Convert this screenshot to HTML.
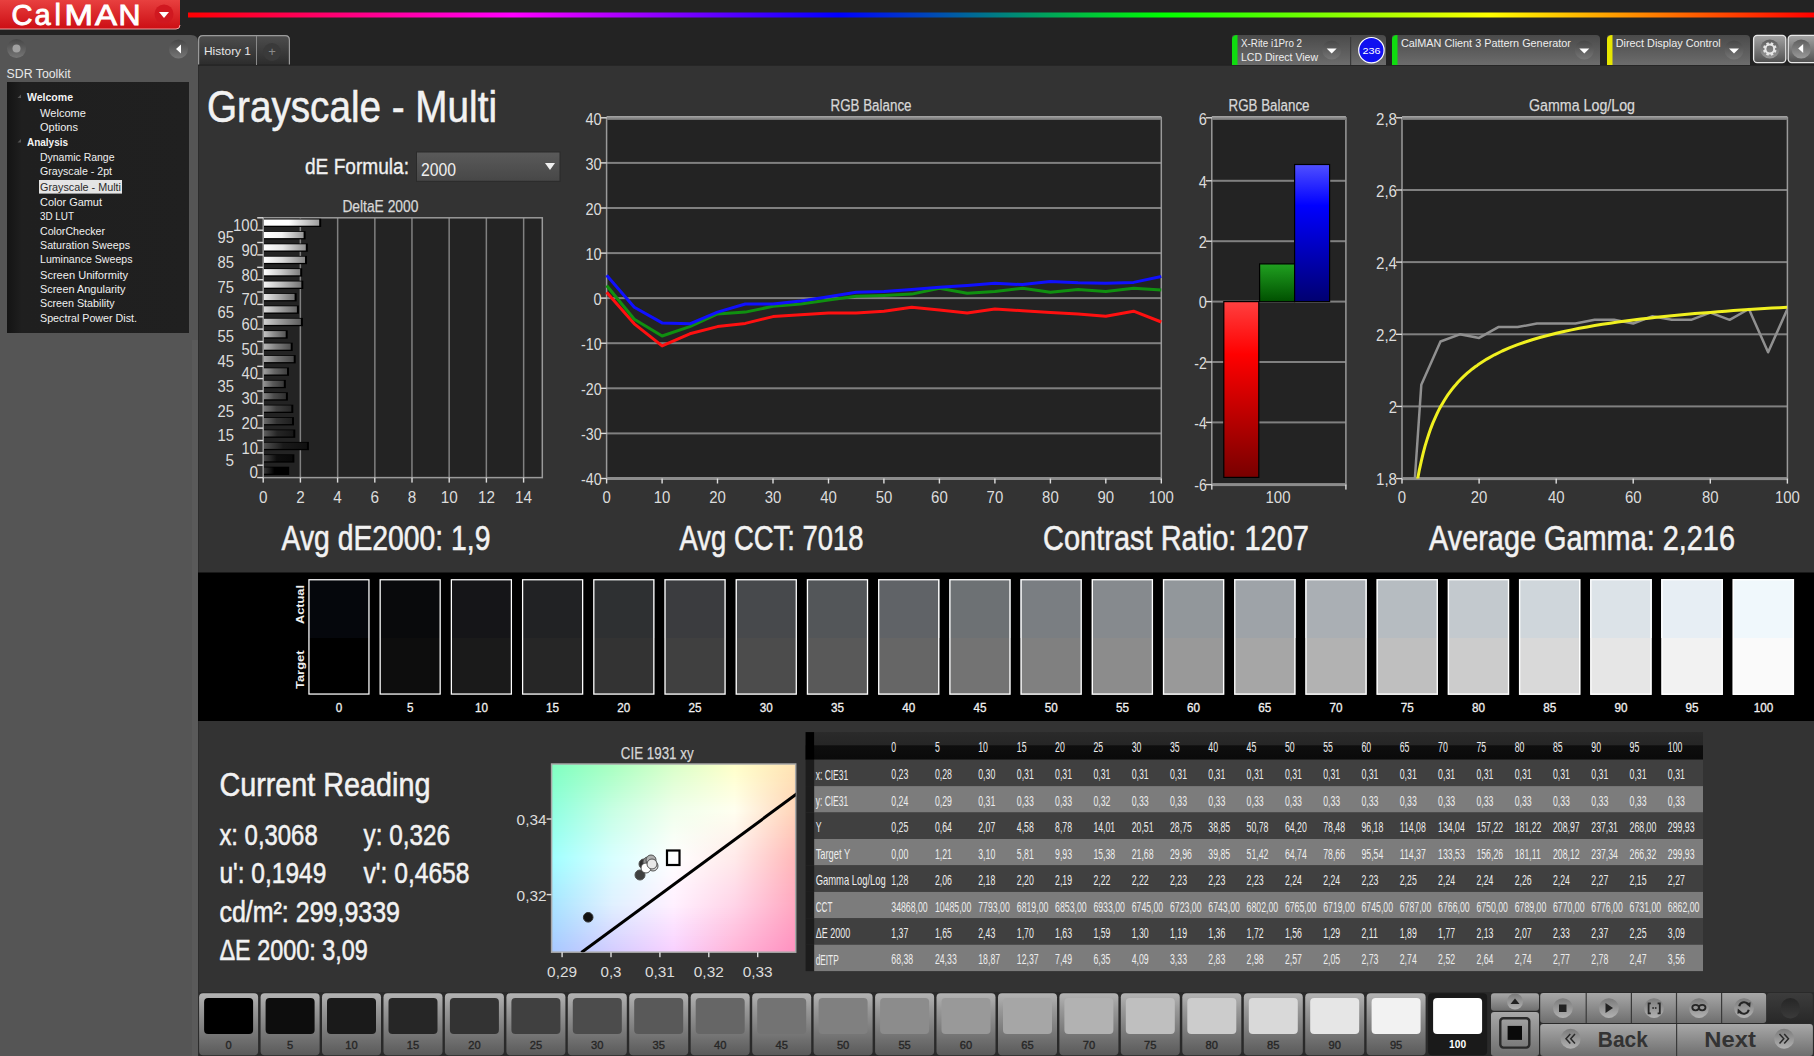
<!DOCTYPE html>
<html><head><meta charset="utf-8"><title>CalMAN</title>
<style>
html,body{margin:0;padding:0;background:#232323;overflow:hidden;width:1814px;height:1056px}
svg{display:block;font-family:"Liberation Sans",sans-serif}
</style></head><body>
<svg width="1814" height="1056" viewBox="0 0 1814 1056">
<defs>
<linearGradient id="rainbow" x1="0" x2="1" y1="0" y2="0">
 <stop offset="0" stop-color="#ff0000"/><stop offset="0.2" stop-color="#ff00ff"/>
 <stop offset="0.4" stop-color="#0000ff"/><stop offset="0.6" stop-color="#00ff00"/>
 <stop offset="0.8" stop-color="#ffff00"/><stop offset="1" stop-color="#ff0000"/></linearGradient>
<linearGradient id="logo" x1="0" x2="0" y1="0" y2="1">
 <stop offset="0" stop-color="#e8403f"/><stop offset="1" stop-color="#cc0e14"/></linearGradient>
<linearGradient id="wid" x1="0" x2="0" y1="0" y2="1">
 <stop offset="0" stop-color="#4a4a4a"/><stop offset="1" stop-color="#6c6c6c"/></linearGradient>
<linearGradient id="tab" x1="0" x2="0" y1="0" y2="1">
 <stop offset="0" stop-color="#4e4e4e"/><stop offset="1" stop-color="#2c2c2c"/></linearGradient>
<linearGradient id="knob" x1="0" x2="0" y1="0" y2="1">
 <stop offset="0" stop-color="#474747"/><stop offset="1" stop-color="#767676"/></linearGradient>
<linearGradient id="btn" x1="0" x2="0" y1="0" y2="1">
 <stop offset="0" stop-color="#ababab"/><stop offset="1" stop-color="#5a5a5a"/></linearGradient>
<linearGradient id="btn2" x1="0" x2="0" y1="0" y2="1">
 <stop offset="0" stop-color="#b0b0b0"/><stop offset="1" stop-color="#6a6a6a"/></linearGradient>
<linearGradient id="treeg" x1="0" x2="1" y1="0" y2="0">
 <stop offset="0" stop-color="#141414"/><stop offset="0.08" stop-color="#1f1f1f"/><stop offset="1" stop-color="#202020"/></linearGradient>
</defs>
<rect x="0.0" y="0.0" width="1814.0" height="1056.0" fill="#232323"/>
<rect x="198.0" y="65.0" width="1616.0" height="928.0" fill="#333333"/>
<rect x="198.0" y="992.0" width="1616.0" height="64.0" fill="#2a2a2a"/>
<path d="M0 35 H191 Q198 35 198 42 V1056 H0 Z" fill="#555555"/>
<rect x="192.0" y="340.0" width="6.0" height="716.0" fill="#5a5a5a"/>
<rect x="198.0" y="65.0" width="1.0" height="992.0" fill="#2c2c2c"/>
<path d="M0 0 H180 V25 Q180 29 176 29 H0 Z" fill="url(#logo)"/>
<path d="M0 29 H176 Q180 29 180 25" fill="none" stroke="#f0a0a0" stroke-width="1"/>
<text x="11.5" y="24.8" font-size="29" fill="#ffffff" stroke="#ffffff" stroke-width="0.9">C</text>
<text x="34.5" y="24.8" font-size="29" fill="#ffffff" stroke="#ffffff" stroke-width="0.9">a</text>
<text x="54.5" y="24.8" font-size="29" fill="#ffffff" stroke="#ffffff" stroke-width="0.9">l</text>
<text x="64.5" y="24.8" font-size="29" fill="#ffffff" textLength="28.5" lengthAdjust="spacingAndGlyphs" stroke="#ffffff" stroke-width="0.9">M</text>
<text x="95.0" y="24.8" font-size="29" fill="#ffffff" textLength="22.0" lengthAdjust="spacingAndGlyphs" stroke="#ffffff" stroke-width="0.9">A</text>
<text x="118.5" y="24.8" font-size="29" fill="#ffffff" textLength="22.0" lengthAdjust="spacingAndGlyphs" stroke="#ffffff" stroke-width="0.9">N</text>
<circle cx="164" cy="14" r="9.5" fill="#d01820"/>
<path d="M159 12 H169 L164 18 Z" fill="#ffffff"/>
<rect x="188.0" y="12.5" width="1626.0" height="5.0" fill="url(#rainbow)"/>
<circle cx="16.5" cy="48.5" r="9.5" fill="url(#knob)"/>
<circle cx="16.5" cy="48.5" r="4" fill="#a0a0a0"/>
<circle cx="178.5" cy="49" r="9.5" fill="url(#knob)"/>
<path d="M176 49 L181 44.5 V53.5 Z" fill="#ffffff"/>
<text x="6.6" y="78.0" font-size="12.3" fill="#e8e8e8" textLength="64.0" lengthAdjust="spacingAndGlyphs">SDR Toolkit</text>
<rect x="7.0" y="82.0" width="182.0" height="251.0" fill="url(#treeg)"/>
<path d="M17.5 98.1 L21 94.6 V98.1 Z" fill="#555"/>
<text x="27.0" y="101.1" font-size="11.2" fill="#f4f4f4" textLength="46.0" lengthAdjust="spacingAndGlyphs" font-weight="bold">Welcome</text>
<text x="40.0" y="117.0" font-size="11.2" fill="#f0f0f0" textLength="46.0" lengthAdjust="spacingAndGlyphs">Welcome</text>
<text x="40.0" y="130.9" font-size="11.2" fill="#f0f0f0" textLength="38.0" lengthAdjust="spacingAndGlyphs">Options</text>
<path d="M17.5 142.5 L21 139.0 V142.5 Z" fill="#555"/>
<text x="27.0" y="145.5" font-size="11.2" fill="#f4f4f4" textLength="41.0" lengthAdjust="spacingAndGlyphs" font-weight="bold">Analysis</text>
<text x="40.0" y="161.4" font-size="11.2" fill="#f0f0f0" textLength="74.5" lengthAdjust="spacingAndGlyphs">Dynamic Range</text>
<text x="40.0" y="175.3" font-size="11.2" fill="#f0f0f0" textLength="72.0" lengthAdjust="spacingAndGlyphs">Grayscale - 2pt</text>
<rect x="39.0" y="180.0" width="83.0" height="13.6" fill="#e4e4e4"/>
<text x="40.0" y="190.5" font-size="11.2" fill="#2a2a2a" textLength="81.0" lengthAdjust="spacingAndGlyphs">Grayscale - Multi</text>
<text x="40.0" y="205.8" font-size="11.2" fill="#f0f0f0" textLength="62.0" lengthAdjust="spacingAndGlyphs">Color Gamut</text>
<text x="40.0" y="219.7" font-size="11.2" fill="#f0f0f0" textLength="34.0" lengthAdjust="spacingAndGlyphs">3D LUT</text>
<text x="40.0" y="234.5" font-size="11.2" fill="#f0f0f0" textLength="65.0" lengthAdjust="spacingAndGlyphs">ColorChecker</text>
<text x="40.0" y="248.9" font-size="11.2" fill="#f0f0f0" textLength="90.0" lengthAdjust="spacingAndGlyphs">Saturation Sweeps</text>
<text x="40.0" y="263.3" font-size="11.2" fill="#f0f0f0" textLength="92.5" lengthAdjust="spacingAndGlyphs">Luminance Sweeps</text>
<text x="40.0" y="278.5" font-size="11.2" fill="#f0f0f0" textLength="88.0" lengthAdjust="spacingAndGlyphs">Screen Uniformity</text>
<text x="40.0" y="292.9" font-size="11.2" fill="#f0f0f0" textLength="85.5" lengthAdjust="spacingAndGlyphs">Screen Angularity</text>
<text x="40.0" y="307.3" font-size="11.2" fill="#f0f0f0" textLength="74.5" lengthAdjust="spacingAndGlyphs">Screen Stability</text>
<text x="40.0" y="322.4" font-size="11.2" fill="#f0f0f0" textLength="97.0" lengthAdjust="spacingAndGlyphs">Spectral Power Dist.</text>
<path d="M198 65 V40 Q198 35 203 35 H285 Q290 35 290 40 V65 Z" fill="url(#tab)"/>
<path d="M198.6 65 V40 Q198.6 35.6 203 35.6 H285 Q289.4 35.6 289.4 40 V65" fill="none" stroke="#9a9a9a" stroke-width="1.2"/>
<rect x="198.0" y="64.5" width="1616.0" height="1.2" fill="#222222"/>
<rect x="256.0" y="36.0" width="1.0" height="29.0" fill="#8a8a8a"/>
<text x="204.0" y="55.0" font-size="11.5" fill="#e6e6e6" textLength="47.0" lengthAdjust="spacingAndGlyphs">History 1</text>
<circle cx="272" cy="52" r="9" fill="#3a3a3a"/>
<text x="272.0" y="56.0" font-size="13" fill="#8a8a8a" text-anchor="middle">+</text>
<path d="M1232 65 V37 Q1232 35 1234 35 H1382 Q1386 35 1386 39 V65 Z" fill="url(#wid)"/>
<path d="M1232 65 V39.5 Q1232 35 1237.5 35 V65 Z" fill="#10dc10"/>
<text x="1241.0" y="46.5" font-size="11.2" fill="#eeeeee" textLength="61.0" lengthAdjust="spacingAndGlyphs">X-Rite i1Pro 2</text>
<text x="1241.0" y="60.6" font-size="11.2" fill="#eeeeee" textLength="77.0" lengthAdjust="spacingAndGlyphs">LCD Direct View</text>
<circle cx="1331.7" cy="50" r="9.5" fill="url(#knob)"/>
<path d="M1326.7 48.5 H1336.7 L1331.7 53.5 Z" fill="#ffffff"/>
<rect x="1350.0" y="37.0" width="1.2" height="28.0" fill="#3a3a3a"/>
<circle cx="1371.4" cy="50.2" r="12.7" fill="#1010f0" stroke="#ffffff" stroke-width="1.2"/>
<text x="1371.4" y="54.0" font-size="9.5" fill="#ffffff" text-anchor="middle" textLength="18.0" lengthAdjust="spacingAndGlyphs">236</text>
<path d="M1392 65 V37 Q1392 35 1394 35 H1596 Q1600 35 1600 39 V65 Z" fill="url(#wid)"/>
<path d="M1392 65 V39.5 Q1392 35 1397.5 35 V65 Z" fill="#10dc10"/>
<text x="1401.0" y="46.5" font-size="11.2" fill="#eeeeee" textLength="170.0" lengthAdjust="spacingAndGlyphs">CalMAN Client 3 Pattern Generator</text>
<circle cx="1584.3" cy="50" r="9.5" fill="url(#knob)"/>
<path d="M1579.3 48.5 H1589.3 L1584.3 53.5 Z" fill="#ffffff"/>
<path d="M1607 65 V37 Q1607 35 1609 35 H1746 Q1750 35 1750 39 V65 Z" fill="url(#wid)"/>
<path d="M1607 65 V39.5 Q1607 35 1612.5 35 V65 Z" fill="#e6e600"/>
<text x="1615.7" y="46.5" font-size="11.2" fill="#eeeeee" textLength="105.0" lengthAdjust="spacingAndGlyphs">Direct Display Control</text>
<circle cx="1734" cy="50" r="9.5" fill="url(#knob)"/>
<path d="M1729 48.5 H1739 L1734 53.5 Z" fill="#ffffff"/>
<linearGradient id="gbtn" x1="0" x2="0" y1="0" y2="1"><stop offset="0" stop-color="#a4a4a4"/><stop offset="1" stop-color="#505050"/></linearGradient>
<linearGradient id="gknob" x1="0" x2="0" y1="0" y2="1"><stop offset="0" stop-color="#5e5e5e"/><stop offset="1" stop-color="#9a9a9a"/></linearGradient>
<rect x="1753.6" y="35.4" width="32.2" height="27.2" rx="3.5" fill="url(#gbtn)" stroke="#e8e8e8" stroke-width="1.3"/>
<circle cx="1769.8" cy="49" r="9.6" fill="url(#gknob)"/>
<g transform="translate(1769.8 49)"><rect x="-1.3" y="-6.8" width="2.6" height="3" fill="#e6e6e6" transform="rotate(22.5)"/><rect x="-1.3" y="-6.8" width="2.6" height="3" fill="#e6e6e6" transform="rotate(67.5)"/><rect x="-1.3" y="-6.8" width="2.6" height="3" fill="#e6e6e6" transform="rotate(112.5)"/><rect x="-1.3" y="-6.8" width="2.6" height="3" fill="#e6e6e6" transform="rotate(157.5)"/><rect x="-1.3" y="-6.8" width="2.6" height="3" fill="#e6e6e6" transform="rotate(202.5)"/><rect x="-1.3" y="-6.8" width="2.6" height="3" fill="#e6e6e6" transform="rotate(247.5)"/><rect x="-1.3" y="-6.8" width="2.6" height="3" fill="#e6e6e6" transform="rotate(292.5)"/><rect x="-1.3" y="-6.8" width="2.6" height="3" fill="#e6e6e6" transform="rotate(337.5)"/><circle r="4.4" fill="none" stroke="#e6e6e6" stroke-width="2"/></g>
<rect x="1788.2" y="35.4" width="30" height="27.2" rx="3.5" fill="url(#gbtn)" stroke="#e8e8e8" stroke-width="1.3"/>
<circle cx="1801.2" cy="49" r="9.6" fill="url(#gknob)"/>
<path d="M1798.2 48.5 L1803.2 44 V53 Z" fill="#ffffff"/>
<text x="207.0" y="122.3" font-size="44.5" fill="#f2f2f2" textLength="290.0" lengthAdjust="spacingAndGlyphs" stroke="#f2f2f2" stroke-width="0.55">Grayscale - Multi</text>
<text x="305.0" y="174.4" font-size="22" fill="#f0f0f0" textLength="104.0" lengthAdjust="spacingAndGlyphs" stroke="#f0f0f0" stroke-width="0.35">dE Formula:</text>
<linearGradient id="dd" x1="0" x2="0" y1="0" y2="1"><stop offset="0" stop-color="#5a5a5a"/><stop offset="1" stop-color="#474747"/></linearGradient>
<rect x="416.5" y="152" width="143.5" height="29.3" fill="url(#dd)" stroke="#2a2a2a" stroke-width="1"/>
<text x="421.0" y="176.0" font-size="19" fill="#f0f0f0" textLength="35.0" lengthAdjust="spacingAndGlyphs">2000</text>
<path d="M545 163 H555 L550 170 Z" fill="#f0f0f0"/>
<linearGradient id="tborder" x1="0" x2="0" y1="0" y2="1"><stop offset="0" stop-color="#a8a8a8"/><stop offset="1" stop-color="#6e6e6e"/></linearGradient>
<text x="380.4" y="211.8" font-size="17" fill="#d8d8d8" text-anchor="middle" textLength="76.0" lengthAdjust="spacingAndGlyphs" stroke="#d8d8d8" stroke-width="0.25">DeltaE 2000</text>
<rect x="263.2" y="217.8" width="279.1" height="259.8" fill="#232323"/>
<rect x="299.6" y="217.8" width="1.5" height="259.8" fill="#808080"/>
<rect x="336.9" y="217.8" width="1.5" height="259.8" fill="#808080"/>
<rect x="374.1" y="217.8" width="1.5" height="259.8" fill="#808080"/>
<rect x="411.2" y="217.8" width="1.5" height="259.8" fill="#808080"/>
<rect x="448.4" y="217.8" width="1.5" height="259.8" fill="#808080"/>
<rect x="485.6" y="217.8" width="1.5" height="259.8" fill="#808080"/>
<rect x="522.9" y="217.8" width="1.5" height="259.8" fill="#808080"/>
<rect x="263.2" y="217.8" width="279.09999999999997" height="259.8" fill="none" stroke="#9a9a9a" stroke-width="1.5"/>
<linearGradient id="bg0" x1="0" x2="1" y1="0" y2="0"><stop offset="0" stop-color="rgb(55,55,55)"/><stop offset="0.45" stop-color="rgb(0,0,0)"/><stop offset="1" stop-color="rgb(0,0,0)"/></linearGradient>
<rect x="264.0" y="466.7" width="25.2" height="8.3" fill="#000"/>
<rect x="264.0" y="467.5" width="23.2" height="6.2" fill="url(#bg0)"/>
<linearGradient id="bg1" x1="0" x2="1" y1="0" y2="0"><stop offset="0" stop-color="rgb(68,68,68)"/><stop offset="0.45" stop-color="rgb(13,13,13)"/><stop offset="1" stop-color="rgb(8,8,8)"/></linearGradient>
<rect x="264.0" y="454.3" width="30.4" height="8.3" fill="#000"/>
<rect x="264.0" y="455.1" width="28.4" height="6.2" fill="url(#bg1)"/>
<linearGradient id="bg2" x1="0" x2="1" y1="0" y2="0"><stop offset="0" stop-color="rgb(81,81,81)"/><stop offset="0.45" stop-color="rgb(26,26,26)"/><stop offset="1" stop-color="rgb(16,16,16)"/></linearGradient>
<rect x="264.0" y="441.9" width="44.9" height="8.3" fill="#000"/>
<rect x="264.0" y="442.7" width="42.9" height="6.2" fill="url(#bg2)"/>
<linearGradient id="bg3" x1="0" x2="1" y1="0" y2="0"><stop offset="0" stop-color="rgb(93,93,93)"/><stop offset="0.45" stop-color="rgb(38,38,38)"/><stop offset="1" stop-color="rgb(23,23,23)"/></linearGradient>
<rect x="264.0" y="429.5" width="31.3" height="8.3" fill="#000"/>
<rect x="264.0" y="430.3" width="29.3" height="6.2" fill="url(#bg3)"/>
<linearGradient id="bg4" x1="0" x2="1" y1="0" y2="0"><stop offset="0" stop-color="rgb(106,106,106)"/><stop offset="0.45" stop-color="rgb(51,51,51)"/><stop offset="1" stop-color="rgb(31,31,31)"/></linearGradient>
<rect x="264.0" y="417.1" width="30.0" height="8.3" fill="#000"/>
<rect x="264.0" y="417.9" width="28.0" height="6.2" fill="url(#bg4)"/>
<linearGradient id="bg5" x1="0" x2="1" y1="0" y2="0"><stop offset="0" stop-color="rgb(119,119,119)"/><stop offset="0.45" stop-color="rgb(64,64,64)"/><stop offset="1" stop-color="rgb(39,39,39)"/></linearGradient>
<rect x="264.0" y="404.7" width="29.3" height="8.3" fill="#000"/>
<rect x="264.0" y="405.5" width="27.3" height="6.2" fill="url(#bg5)"/>
<linearGradient id="bg6" x1="0" x2="1" y1="0" y2="0"><stop offset="0" stop-color="rgb(131,131,131)"/><stop offset="0.45" stop-color="rgb(76,76,76)"/><stop offset="1" stop-color="rgb(47,47,47)"/></linearGradient>
<rect x="264.0" y="392.3" width="23.9" height="8.3" fill="#000"/>
<rect x="264.0" y="393.1" width="21.9" height="6.2" fill="url(#bg6)"/>
<linearGradient id="bg7" x1="0" x2="1" y1="0" y2="0"><stop offset="0" stop-color="rgb(144,144,144)"/><stop offset="0.45" stop-color="rgb(89,89,89)"/><stop offset="1" stop-color="rgb(55,55,55)"/></linearGradient>
<rect x="264.0" y="379.9" width="21.8" height="8.3" fill="#000"/>
<rect x="264.0" y="380.7" width="19.8" height="6.2" fill="url(#bg7)"/>
<linearGradient id="bg8" x1="0" x2="1" y1="0" y2="0"><stop offset="0" stop-color="rgb(157,157,157)"/><stop offset="0.45" stop-color="rgb(102,102,102)"/><stop offset="1" stop-color="rgb(63,63,63)"/></linearGradient>
<rect x="264.0" y="367.5" width="25.0" height="8.3" fill="#000"/>
<rect x="264.0" y="368.3" width="23.0" height="6.2" fill="url(#bg8)"/>
<linearGradient id="bg9" x1="0" x2="1" y1="0" y2="0"><stop offset="0" stop-color="rgb(170,170,170)"/><stop offset="0.45" stop-color="rgb(115,115,115)"/><stop offset="1" stop-color="rgb(71,71,71)"/></linearGradient>
<rect x="264.0" y="355.1" width="31.7" height="8.3" fill="#000"/>
<rect x="264.0" y="355.9" width="29.7" height="6.2" fill="url(#bg9)"/>
<linearGradient id="bg10" x1="0" x2="1" y1="0" y2="0"><stop offset="0" stop-color="rgb(183,183,183)"/><stop offset="0.45" stop-color="rgb(128,128,128)"/><stop offset="1" stop-color="rgb(79,79,79)"/></linearGradient>
<rect x="264.0" y="342.7" width="28.7" height="8.3" fill="#000"/>
<rect x="264.0" y="343.5" width="26.7" height="6.2" fill="url(#bg10)"/>
<linearGradient id="bg11" x1="0" x2="1" y1="0" y2="0"><stop offset="0" stop-color="rgb(195,195,195)"/><stop offset="0.45" stop-color="rgb(140,140,140)"/><stop offset="1" stop-color="rgb(86,86,86)"/></linearGradient>
<rect x="264.0" y="330.3" width="23.7" height="8.3" fill="#000"/>
<rect x="264.0" y="331.1" width="21.7" height="6.2" fill="url(#bg11)"/>
<linearGradient id="bg12" x1="0" x2="1" y1="0" y2="0"><stop offset="0" stop-color="rgb(208,208,208)"/><stop offset="0.45" stop-color="rgb(153,153,153)"/><stop offset="1" stop-color="rgb(94,94,94)"/></linearGradient>
<rect x="264.0" y="317.9" width="38.9" height="8.3" fill="#000"/>
<rect x="264.0" y="318.7" width="36.9" height="6.2" fill="url(#bg12)"/>
<linearGradient id="bg13" x1="0" x2="1" y1="0" y2="0"><stop offset="0" stop-color="rgb(221,221,221)"/><stop offset="0.45" stop-color="rgb(166,166,166)"/><stop offset="1" stop-color="rgb(102,102,102)"/></linearGradient>
<rect x="264.0" y="305.5" width="34.9" height="8.3" fill="#000"/>
<rect x="264.0" y="306.3" width="32.9" height="6.2" fill="url(#bg13)"/>
<linearGradient id="bg14" x1="0" x2="1" y1="0" y2="0"><stop offset="0" stop-color="rgb(233,233,233)"/><stop offset="0.45" stop-color="rgb(178,178,178)"/><stop offset="1" stop-color="rgb(110,110,110)"/></linearGradient>
<rect x="264.0" y="293.1" width="32.6" height="8.3" fill="#000"/>
<rect x="264.0" y="293.9" width="30.6" height="6.2" fill="url(#bg14)"/>
<linearGradient id="bg15" x1="0" x2="1" y1="0" y2="0"><stop offset="0" stop-color="rgb(246,246,246)"/><stop offset="0.45" stop-color="rgb(191,191,191)"/><stop offset="1" stop-color="rgb(118,118,118)"/></linearGradient>
<rect x="264.0" y="280.7" width="39.3" height="8.3" fill="#000"/>
<rect x="264.0" y="281.5" width="37.3" height="6.2" fill="url(#bg15)"/>
<linearGradient id="bg16" x1="0" x2="1" y1="0" y2="0"><stop offset="0" stop-color="rgb(255,255,255)"/><stop offset="0.45" stop-color="rgb(204,204,204)"/><stop offset="1" stop-color="rgb(126,126,126)"/></linearGradient>
<rect x="264.0" y="268.3" width="38.2" height="8.3" fill="#000"/>
<rect x="264.0" y="269.1" width="36.2" height="6.2" fill="url(#bg16)"/>
<linearGradient id="bg17" x1="0" x2="1" y1="0" y2="0"><stop offset="0" stop-color="rgb(255,255,255)"/><stop offset="0.45" stop-color="rgb(217,217,217)"/><stop offset="1" stop-color="rgb(134,134,134)"/></linearGradient>
<rect x="264.0" y="255.9" width="43.0" height="8.3" fill="#000"/>
<rect x="264.0" y="256.7" width="41.0" height="6.2" fill="url(#bg17)"/>
<linearGradient id="bg18" x1="0" x2="1" y1="0" y2="0"><stop offset="0" stop-color="rgb(255,255,255)"/><stop offset="0.45" stop-color="rgb(230,230,230)"/><stop offset="1" stop-color="rgb(142,142,142)"/></linearGradient>
<rect x="264.0" y="243.5" width="43.8" height="8.3" fill="#000"/>
<rect x="264.0" y="244.3" width="41.8" height="6.2" fill="url(#bg18)"/>
<linearGradient id="bg19" x1="0" x2="1" y1="0" y2="0"><stop offset="0" stop-color="rgb(255,255,255)"/><stop offset="0.45" stop-color="rgb(242,242,242)"/><stop offset="1" stop-color="rgb(150,150,150)"/></linearGradient>
<rect x="264.0" y="231.1" width="41.6" height="8.3" fill="#000"/>
<rect x="264.0" y="231.9" width="39.6" height="6.2" fill="url(#bg19)"/>
<linearGradient id="bg20" x1="0" x2="1" y1="0" y2="0"><stop offset="0" stop-color="rgb(255,255,255)"/><stop offset="0.45" stop-color="rgb(255,255,255)"/><stop offset="1" stop-color="rgb(158,158,158)"/></linearGradient>
<rect x="264.0" y="218.7" width="57.2" height="8.3" fill="#000"/>
<rect x="264.0" y="219.5" width="55.2" height="6.2" fill="url(#bg20)"/>
<text x="258.0" y="478.4" font-size="16" fill="#dcdcdc" text-anchor="end" textLength="8.5" lengthAdjust="spacingAndGlyphs">0</text>
<text x="234.0" y="466.0" font-size="16" fill="#dcdcdc" text-anchor="end" textLength="8.5" lengthAdjust="spacingAndGlyphs">5</text>
<text x="258.0" y="453.7" font-size="16" fill="#dcdcdc" text-anchor="end" textLength="16.5" lengthAdjust="spacingAndGlyphs">10</text>
<text x="234.0" y="441.3" font-size="16" fill="#dcdcdc" text-anchor="end" textLength="16.5" lengthAdjust="spacingAndGlyphs">15</text>
<text x="258.0" y="428.9" font-size="16" fill="#dcdcdc" text-anchor="end" textLength="16.5" lengthAdjust="spacingAndGlyphs">20</text>
<text x="234.0" y="416.6" font-size="16" fill="#dcdcdc" text-anchor="end" textLength="16.5" lengthAdjust="spacingAndGlyphs">25</text>
<text x="258.0" y="404.2" font-size="16" fill="#dcdcdc" text-anchor="end" textLength="16.5" lengthAdjust="spacingAndGlyphs">30</text>
<text x="234.0" y="391.8" font-size="16" fill="#dcdcdc" text-anchor="end" textLength="16.5" lengthAdjust="spacingAndGlyphs">35</text>
<text x="258.0" y="379.4" font-size="16" fill="#dcdcdc" text-anchor="end" textLength="16.5" lengthAdjust="spacingAndGlyphs">40</text>
<text x="234.0" y="367.1" font-size="16" fill="#dcdcdc" text-anchor="end" textLength="16.5" lengthAdjust="spacingAndGlyphs">45</text>
<text x="258.0" y="354.7" font-size="16" fill="#dcdcdc" text-anchor="end" textLength="16.5" lengthAdjust="spacingAndGlyphs">50</text>
<text x="234.0" y="342.3" font-size="16" fill="#dcdcdc" text-anchor="end" textLength="16.5" lengthAdjust="spacingAndGlyphs">55</text>
<text x="258.0" y="330.0" font-size="16" fill="#dcdcdc" text-anchor="end" textLength="16.5" lengthAdjust="spacingAndGlyphs">60</text>
<text x="234.0" y="317.6" font-size="16" fill="#dcdcdc" text-anchor="end" textLength="16.5" lengthAdjust="spacingAndGlyphs">65</text>
<text x="258.0" y="305.2" font-size="16" fill="#dcdcdc" text-anchor="end" textLength="16.5" lengthAdjust="spacingAndGlyphs">70</text>
<text x="234.0" y="292.8" font-size="16" fill="#dcdcdc" text-anchor="end" textLength="16.5" lengthAdjust="spacingAndGlyphs">75</text>
<text x="258.0" y="280.5" font-size="16" fill="#dcdcdc" text-anchor="end" textLength="16.5" lengthAdjust="spacingAndGlyphs">80</text>
<text x="234.0" y="268.1" font-size="16" fill="#dcdcdc" text-anchor="end" textLength="16.5" lengthAdjust="spacingAndGlyphs">85</text>
<text x="258.0" y="255.7" font-size="16" fill="#dcdcdc" text-anchor="end" textLength="16.5" lengthAdjust="spacingAndGlyphs">90</text>
<text x="234.0" y="243.4" font-size="16" fill="#dcdcdc" text-anchor="end" textLength="16.5" lengthAdjust="spacingAndGlyphs">95</text>
<text x="258.0" y="231.0" font-size="16" fill="#dcdcdc" text-anchor="end" textLength="25.0" lengthAdjust="spacingAndGlyphs">100</text>
<rect x="257.2" y="476.9" width="6.0" height="1.4" fill="#dcdcdc"/>
<rect x="257.2" y="464.5" width="6.0" height="1.4" fill="#dcdcdc"/>
<rect x="257.2" y="452.2" width="6.0" height="1.4" fill="#dcdcdc"/>
<rect x="257.2" y="439.8" width="6.0" height="1.4" fill="#dcdcdc"/>
<rect x="257.2" y="427.4" width="6.0" height="1.4" fill="#dcdcdc"/>
<rect x="257.2" y="415.0" width="6.0" height="1.4" fill="#dcdcdc"/>
<rect x="257.2" y="402.7" width="6.0" height="1.4" fill="#dcdcdc"/>
<rect x="257.2" y="390.3" width="6.0" height="1.4" fill="#dcdcdc"/>
<rect x="257.2" y="377.9" width="6.0" height="1.4" fill="#dcdcdc"/>
<rect x="257.2" y="365.6" width="6.0" height="1.4" fill="#dcdcdc"/>
<rect x="257.2" y="353.2" width="6.0" height="1.4" fill="#dcdcdc"/>
<rect x="257.2" y="340.8" width="6.0" height="1.4" fill="#dcdcdc"/>
<rect x="257.2" y="328.4" width="6.0" height="1.4" fill="#dcdcdc"/>
<rect x="257.2" y="316.1" width="6.0" height="1.4" fill="#dcdcdc"/>
<rect x="257.2" y="303.7" width="6.0" height="1.4" fill="#dcdcdc"/>
<rect x="257.2" y="291.3" width="6.0" height="1.4" fill="#dcdcdc"/>
<rect x="257.2" y="279.0" width="6.0" height="1.4" fill="#dcdcdc"/>
<rect x="257.2" y="266.6" width="6.0" height="1.4" fill="#dcdcdc"/>
<rect x="257.2" y="254.2" width="6.0" height="1.4" fill="#dcdcdc"/>
<rect x="257.2" y="241.8" width="6.0" height="1.4" fill="#dcdcdc"/>
<rect x="257.2" y="229.5" width="6.0" height="1.4" fill="#dcdcdc"/>
<rect x="257.2" y="217.1" width="6.0" height="1.4" fill="#dcdcdc"/>
<rect x="262.5" y="477.6" width="1.4" height="5.0" fill="#dcdcdc"/>
<text x="263.2" y="503.0" font-size="16" fill="#dcdcdc" text-anchor="middle" textLength="8.5" lengthAdjust="spacingAndGlyphs">0</text>
<rect x="299.7" y="477.6" width="1.4" height="5.0" fill="#dcdcdc"/>
<text x="300.4" y="503.0" font-size="16" fill="#dcdcdc" text-anchor="middle" textLength="8.5" lengthAdjust="spacingAndGlyphs">2</text>
<rect x="336.9" y="477.6" width="1.4" height="5.0" fill="#dcdcdc"/>
<text x="337.6" y="503.0" font-size="16" fill="#dcdcdc" text-anchor="middle" textLength="8.5" lengthAdjust="spacingAndGlyphs">4</text>
<rect x="374.1" y="477.6" width="1.4" height="5.0" fill="#dcdcdc"/>
<text x="374.8" y="503.0" font-size="16" fill="#dcdcdc" text-anchor="middle" textLength="8.5" lengthAdjust="spacingAndGlyphs">6</text>
<rect x="411.3" y="477.6" width="1.4" height="5.0" fill="#dcdcdc"/>
<text x="412.0" y="503.0" font-size="16" fill="#dcdcdc" text-anchor="middle" textLength="8.5" lengthAdjust="spacingAndGlyphs">8</text>
<rect x="448.5" y="477.6" width="1.4" height="5.0" fill="#dcdcdc"/>
<text x="449.2" y="503.0" font-size="16" fill="#dcdcdc" text-anchor="middle" textLength="17.0" lengthAdjust="spacingAndGlyphs">10</text>
<rect x="485.7" y="477.6" width="1.4" height="5.0" fill="#dcdcdc"/>
<text x="486.4" y="503.0" font-size="16" fill="#dcdcdc" text-anchor="middle" textLength="17.0" lengthAdjust="spacingAndGlyphs">12</text>
<rect x="522.9" y="477.6" width="1.4" height="5.0" fill="#dcdcdc"/>
<text x="523.6" y="503.0" font-size="16" fill="#dcdcdc" text-anchor="middle" textLength="17.0" lengthAdjust="spacingAndGlyphs">14</text>
<text x="871.0" y="111.2" font-size="17.3" fill="#d8d8d8" text-anchor="middle" textLength="81.0" lengthAdjust="spacingAndGlyphs" stroke="#d8d8d8" stroke-width="0.25">RGB Balance</text>
<rect x="606.6" y="117.8" width="554.7" height="360.7" fill="#232323"/>
<rect x="606.6" y="161.9" width="554.7" height="2.0" fill="#808080"/>
<rect x="606.6" y="207.0" width="554.7" height="2.0" fill="#808080"/>
<rect x="606.6" y="252.1" width="554.7" height="2.0" fill="#808080"/>
<rect x="606.6" y="297.1" width="554.7" height="2.0" fill="#808080"/>
<rect x="606.6" y="342.2" width="554.7" height="2.0" fill="#808080"/>
<rect x="606.6" y="387.3" width="554.7" height="2.0" fill="#808080"/>
<rect x="606.6" y="432.4" width="554.7" height="2.0" fill="#808080"/>
<rect x="606.6" y="117.8" width="554.6999999999999" height="360.7" fill="none" stroke="#9a9a9a" stroke-width="1.5"/>
<rect x="606.6" y="116.0" width="554.7" height="4.0" fill="url(#tborder)"/>
<rect x="606.6" y="477.0" width="554.7" height="3.0" fill="#8c8c8c"/>
<rect x="600.6" y="117.1" width="6.0" height="1.4" fill="#dcdcdc"/>
<text x="601.6" y="124.6" font-size="16" fill="#dcdcdc" text-anchor="end" textLength="16.2" lengthAdjust="spacingAndGlyphs">40</text>
<rect x="600.6" y="162.2" width="6.0" height="1.4" fill="#dcdcdc"/>
<text x="601.6" y="169.7" font-size="16" fill="#dcdcdc" text-anchor="end" textLength="16.2" lengthAdjust="spacingAndGlyphs">30</text>
<rect x="600.6" y="207.3" width="6.0" height="1.4" fill="#dcdcdc"/>
<text x="601.6" y="214.8" font-size="16" fill="#dcdcdc" text-anchor="end" textLength="16.2" lengthAdjust="spacingAndGlyphs">20</text>
<rect x="600.6" y="252.4" width="6.0" height="1.4" fill="#dcdcdc"/>
<text x="601.6" y="259.9" font-size="16" fill="#dcdcdc" text-anchor="end" textLength="16.2" lengthAdjust="spacingAndGlyphs">10</text>
<rect x="600.6" y="297.4" width="6.0" height="1.4" fill="#dcdcdc"/>
<text x="601.6" y="304.9" font-size="16" fill="#dcdcdc" text-anchor="end" textLength="8.1" lengthAdjust="spacingAndGlyphs">0</text>
<rect x="600.6" y="342.5" width="6.0" height="1.4" fill="#dcdcdc"/>
<text x="601.6" y="350.0" font-size="16" fill="#dcdcdc" text-anchor="end" textLength="20.6" lengthAdjust="spacingAndGlyphs">-10</text>
<rect x="600.6" y="387.6" width="6.0" height="1.4" fill="#dcdcdc"/>
<text x="601.6" y="395.1" font-size="16" fill="#dcdcdc" text-anchor="end" textLength="20.6" lengthAdjust="spacingAndGlyphs">-20</text>
<rect x="600.6" y="432.7" width="6.0" height="1.4" fill="#dcdcdc"/>
<text x="601.6" y="440.2" font-size="16" fill="#dcdcdc" text-anchor="end" textLength="20.6" lengthAdjust="spacingAndGlyphs">-30</text>
<rect x="600.6" y="477.8" width="6.0" height="1.4" fill="#dcdcdc"/>
<text x="601.6" y="485.3" font-size="16" fill="#dcdcdc" text-anchor="end" textLength="20.6" lengthAdjust="spacingAndGlyphs">-40</text>
<rect x="605.9" y="478.5" width="1.4" height="5.0" fill="#dcdcdc"/>
<text x="606.6" y="503.0" font-size="16" fill="#dcdcdc" text-anchor="middle" textLength="8.3" lengthAdjust="spacingAndGlyphs">0</text>
<rect x="661.4" y="478.5" width="1.4" height="5.0" fill="#dcdcdc"/>
<text x="662.1" y="503.0" font-size="16" fill="#dcdcdc" text-anchor="middle" textLength="16.6" lengthAdjust="spacingAndGlyphs">10</text>
<rect x="716.8" y="478.5" width="1.4" height="5.0" fill="#dcdcdc"/>
<text x="717.5" y="503.0" font-size="16" fill="#dcdcdc" text-anchor="middle" textLength="16.6" lengthAdjust="spacingAndGlyphs">20</text>
<rect x="772.3" y="478.5" width="1.4" height="5.0" fill="#dcdcdc"/>
<text x="773.0" y="503.0" font-size="16" fill="#dcdcdc" text-anchor="middle" textLength="16.6" lengthAdjust="spacingAndGlyphs">30</text>
<rect x="827.8" y="478.5" width="1.4" height="5.0" fill="#dcdcdc"/>
<text x="828.5" y="503.0" font-size="16" fill="#dcdcdc" text-anchor="middle" textLength="16.6" lengthAdjust="spacingAndGlyphs">40</text>
<rect x="883.2" y="478.5" width="1.4" height="5.0" fill="#dcdcdc"/>
<text x="884.0" y="503.0" font-size="16" fill="#dcdcdc" text-anchor="middle" textLength="16.6" lengthAdjust="spacingAndGlyphs">50</text>
<rect x="938.7" y="478.5" width="1.4" height="5.0" fill="#dcdcdc"/>
<text x="939.4" y="503.0" font-size="16" fill="#dcdcdc" text-anchor="middle" textLength="16.6" lengthAdjust="spacingAndGlyphs">60</text>
<rect x="994.2" y="478.5" width="1.4" height="5.0" fill="#dcdcdc"/>
<text x="994.9" y="503.0" font-size="16" fill="#dcdcdc" text-anchor="middle" textLength="16.6" lengthAdjust="spacingAndGlyphs">70</text>
<rect x="1049.7" y="478.5" width="1.4" height="5.0" fill="#dcdcdc"/>
<text x="1050.4" y="503.0" font-size="16" fill="#dcdcdc" text-anchor="middle" textLength="16.6" lengthAdjust="spacingAndGlyphs">80</text>
<rect x="1105.1" y="478.5" width="1.4" height="5.0" fill="#dcdcdc"/>
<text x="1105.8" y="503.0" font-size="16" fill="#dcdcdc" text-anchor="middle" textLength="16.6" lengthAdjust="spacingAndGlyphs">90</text>
<rect x="1160.6" y="478.5" width="1.4" height="5.0" fill="#dcdcdc"/>
<text x="1161.3" y="503.0" font-size="16" fill="#dcdcdc" text-anchor="middle" textLength="24.9" lengthAdjust="spacingAndGlyphs">100</text>
<polyline points="606.6,292.3 634.3,323.8 662.1,345.9 689.8,333.8 717.5,326.6 745.3,323.4 773.0,316.6 800.7,314.8 828.5,313.0 856.2,313.0 884.0,311.2 911.7,307.2 939.4,309.9 967.2,313.0 994.9,309.0 1022.6,310.8 1050.4,312.6 1078.1,313.9 1105.8,316.2 1133.6,311.2 1161.3,322.0" fill="none" stroke="#ff1010" stroke-width="3" stroke-linejoin="round"/>
<polyline points="606.6,285.5 634.3,319.3 662.1,336.0 689.8,326.6 717.5,313.9 745.3,312.1 773.0,306.3 800.7,304.0 828.5,300.0 856.2,296.3 884.0,295.4 911.7,294.1 939.4,288.2 967.2,293.2 994.9,291.4 1022.6,288.2 1050.4,292.3 1078.1,289.6 1105.8,291.4 1133.6,288.2 1161.3,290.0" fill="none" stroke="#109010" stroke-width="3" stroke-linejoin="round"/>
<polyline points="606.6,275.2 634.3,307.2 662.1,322.9 689.8,323.8 717.5,312.1 745.3,304.0 773.0,304.0 800.7,300.9 828.5,296.8 856.2,292.3 884.0,291.4 911.7,289.6 939.4,287.3 967.2,285.5 994.9,283.3 1022.6,284.6 1050.4,281.5 1078.1,282.8 1105.8,283.3 1133.6,282.4 1161.3,276.5" fill="none" stroke="#1010ff" stroke-width="3" stroke-linejoin="round"/>
<text x="1269.0" y="111.2" font-size="17.3" fill="#d8d8d8" text-anchor="middle" textLength="81.0" lengthAdjust="spacingAndGlyphs" stroke="#d8d8d8" stroke-width="0.25">RGB Balance</text>
<rect x="1211.8" y="117.8" width="134.1" height="366.8" fill="#232323"/>
<rect x="1211.8" y="179.8" width="134.1" height="2.0" fill="#808080"/>
<rect x="1211.8" y="240.2" width="134.1" height="2.0" fill="#808080"/>
<rect x="1211.8" y="300.6" width="134.1" height="2.0" fill="#808080"/>
<rect x="1211.8" y="361.0" width="134.1" height="2.0" fill="#808080"/>
<rect x="1211.8" y="421.4" width="134.1" height="2.0" fill="#808080"/>
<rect x="1211.8" y="117.8" width="134.10000000000014" height="366.8" fill="none" stroke="#9a9a9a" stroke-width="1.5"/>
<rect x="1211.8" y="116.0" width="134.1" height="4.0" fill="url(#tborder)"/>
<rect x="1211.8" y="483.1" width="134.1" height="3.0" fill="#8c8c8c"/>
<rect x="1205.8" y="117.1" width="6.0" height="1.4" fill="#dcdcdc"/>
<text x="1206.8" y="124.6" font-size="16" fill="#dcdcdc" text-anchor="end" textLength="8.1" lengthAdjust="spacingAndGlyphs">6</text>
<rect x="1205.8" y="180.1" width="6.0" height="1.4" fill="#dcdcdc"/>
<text x="1206.8" y="187.6" font-size="16" fill="#dcdcdc" text-anchor="end" textLength="8.1" lengthAdjust="spacingAndGlyphs">4</text>
<rect x="1205.8" y="240.5" width="6.0" height="1.4" fill="#dcdcdc"/>
<text x="1206.8" y="248.0" font-size="16" fill="#dcdcdc" text-anchor="end" textLength="8.1" lengthAdjust="spacingAndGlyphs">2</text>
<rect x="1205.8" y="300.9" width="6.0" height="1.4" fill="#dcdcdc"/>
<text x="1206.8" y="308.4" font-size="16" fill="#dcdcdc" text-anchor="end" textLength="8.1" lengthAdjust="spacingAndGlyphs">0</text>
<rect x="1205.8" y="361.3" width="6.0" height="1.4" fill="#dcdcdc"/>
<text x="1206.8" y="368.8" font-size="16" fill="#dcdcdc" text-anchor="end" textLength="12.5" lengthAdjust="spacingAndGlyphs">-2</text>
<rect x="1205.8" y="421.7" width="6.0" height="1.4" fill="#dcdcdc"/>
<text x="1206.8" y="429.2" font-size="16" fill="#dcdcdc" text-anchor="end" textLength="12.5" lengthAdjust="spacingAndGlyphs">-4</text>
<rect x="1205.8" y="483.9" width="6.0" height="1.4" fill="#dcdcdc"/>
<text x="1206.8" y="491.4" font-size="16" fill="#dcdcdc" text-anchor="end" textLength="12.5" lengthAdjust="spacingAndGlyphs">-6</text>
<rect x="1211.1" y="484.6" width="1.4" height="5.0" fill="#dcdcdc"/>
<rect x="1345.2" y="484.6" width="1.4" height="5.0" fill="#dcdcdc"/>
<text x="1278.0" y="503.0" font-size="16" fill="#dcdcdc" text-anchor="middle" textLength="25.0" lengthAdjust="spacingAndGlyphs">100</text>
<linearGradient id="rb" x1="0" x2="0" y1="0" y2="1"><stop offset="0" stop-color="#ff4040"/><stop offset="0.3" stop-color="#ff0000"/><stop offset="1" stop-color="#780000"/></linearGradient>
<linearGradient id="gb" x1="0" x2="0" y1="0" y2="1"><stop offset="0" stop-color="#20a020"/><stop offset="1" stop-color="#005000"/></linearGradient>
<linearGradient id="bb" x1="0" x2="0" y1="0" y2="1"><stop offset="0" stop-color="#5050ff"/><stop offset="0.3" stop-color="#0000ff"/><stop offset="1" stop-color="#000070"/></linearGradient>
<rect x="1223.8" y="301.6" width="35" height="175.8" fill="url(#rb)" stroke="#000" stroke-width="1.2"/>
<rect x="1259.6" y="263.9" width="35" height="37.8" fill="url(#gb)" stroke="#000" stroke-width="1.2"/>
<rect x="1294.6" y="164.5" width="35" height="137.1" fill="url(#bb)" stroke="#000" stroke-width="1.2"/>
<text x="1582.0" y="111.2" font-size="17.3" fill="#d8d8d8" text-anchor="middle" textLength="106.0" lengthAdjust="spacingAndGlyphs" stroke="#d8d8d8" stroke-width="0.25">Gamma Log/Log</text>
<rect x="1402.0" y="117.8" width="385.4" height="360.8" fill="#232323"/>
<rect x="1402.0" y="405.4" width="385.4" height="2.0" fill="#808080"/>
<rect x="1402.0" y="333.3" width="385.4" height="2.0" fill="#808080"/>
<rect x="1402.0" y="261.1" width="385.4" height="2.0" fill="#808080"/>
<rect x="1402.0" y="189.0" width="385.4" height="2.0" fill="#808080"/>
<rect x="1402" y="117.8" width="385.4000000000001" height="360.8" fill="none" stroke="#9a9a9a" stroke-width="1.5"/>
<rect x="1402.0" y="116.0" width="385.4" height="4.0" fill="url(#tborder)"/>
<rect x="1402.0" y="477.1" width="385.4" height="3.0" fill="#8c8c8c"/>
<rect x="1396.0" y="117.1" width="6.0" height="1.4" fill="#dcdcdc"/>
<text x="1397.0" y="124.6" font-size="16" fill="#dcdcdc" text-anchor="end" textLength="21.0" lengthAdjust="spacingAndGlyphs">2,8</text>
<rect x="1396.0" y="189.3" width="6.0" height="1.4" fill="#dcdcdc"/>
<text x="1397.0" y="196.8" font-size="16" fill="#dcdcdc" text-anchor="end" textLength="21.0" lengthAdjust="spacingAndGlyphs">2,6</text>
<rect x="1396.0" y="261.4" width="6.0" height="1.4" fill="#dcdcdc"/>
<text x="1397.0" y="268.9" font-size="16" fill="#dcdcdc" text-anchor="end" textLength="21.0" lengthAdjust="spacingAndGlyphs">2,4</text>
<rect x="1396.0" y="333.6" width="6.0" height="1.4" fill="#dcdcdc"/>
<text x="1397.0" y="341.1" font-size="16" fill="#dcdcdc" text-anchor="end" textLength="21.0" lengthAdjust="spacingAndGlyphs">2,2</text>
<rect x="1396.0" y="405.7" width="6.0" height="1.4" fill="#dcdcdc"/>
<text x="1397.0" y="413.2" font-size="16" fill="#dcdcdc" text-anchor="end" textLength="8.3" lengthAdjust="spacingAndGlyphs">2</text>
<rect x="1396.0" y="477.9" width="6.0" height="1.4" fill="#dcdcdc"/>
<text x="1397.0" y="485.4" font-size="16" fill="#dcdcdc" text-anchor="end" textLength="21.0" lengthAdjust="spacingAndGlyphs">1,8</text>
<rect x="1401.3" y="478.6" width="1.4" height="5.0" fill="#dcdcdc"/>
<text x="1402.0" y="503.0" font-size="16" fill="#dcdcdc" text-anchor="middle" textLength="8.3" lengthAdjust="spacingAndGlyphs">0</text>
<rect x="1478.4" y="478.6" width="1.4" height="5.0" fill="#dcdcdc"/>
<text x="1479.1" y="503.0" font-size="16" fill="#dcdcdc" text-anchor="middle" textLength="16.6" lengthAdjust="spacingAndGlyphs">20</text>
<rect x="1555.5" y="478.6" width="1.4" height="5.0" fill="#dcdcdc"/>
<text x="1556.2" y="503.0" font-size="16" fill="#dcdcdc" text-anchor="middle" textLength="16.6" lengthAdjust="spacingAndGlyphs">40</text>
<rect x="1632.5" y="478.6" width="1.4" height="5.0" fill="#dcdcdc"/>
<text x="1633.2" y="503.0" font-size="16" fill="#dcdcdc" text-anchor="middle" textLength="16.6" lengthAdjust="spacingAndGlyphs">60</text>
<rect x="1709.6" y="478.6" width="1.4" height="5.0" fill="#dcdcdc"/>
<text x="1710.3" y="503.0" font-size="16" fill="#dcdcdc" text-anchor="middle" textLength="16.6" lengthAdjust="spacingAndGlyphs">80</text>
<rect x="1786.7" y="478.6" width="1.4" height="5.0" fill="#dcdcdc"/>
<text x="1787.4" y="503.0" font-size="16" fill="#dcdcdc" text-anchor="middle" textLength="24.9" lengthAdjust="spacingAndGlyphs">100</text>
<clipPath id="gclip"><rect x="1402" y="117.8" width="385.4000000000001" height="360.8"/></clipPath>
<polyline clip-path="url(#gclip)" points="1402.0,666.2 1421.3,384.8 1440.5,341.5 1459.8,334.3 1479.1,337.9 1498.3,327.1 1517.6,327.1 1536.9,323.5 1556.2,323.5 1575.4,323.5 1594.7,319.8 1614.0,319.8 1633.2,323.5 1652.5,316.2 1671.8,319.8 1691.1,319.8 1710.3,312.6 1729.6,319.8 1748.9,309.0 1768.1,352.3 1787.4,309.0" fill="none" stroke="#909090" stroke-width="2.5" stroke-linejoin="round"/>
<polyline clip-path="url(#gclip)" points="1413.6,506.1 1415.5,492.2 1417.4,480.4 1419.3,470.1 1421.3,461.1 1423.2,453.1 1425.1,445.9 1427.1,439.4 1429.0,433.5 1430.9,428.1 1432.8,423.1 1434.8,418.6 1436.7,414.4 1438.6,410.4 1440.5,406.8 1442.5,403.4 1444.4,400.2 1446.3,397.2 1448.2,394.3 1450.2,391.7 1452.1,389.1 1454.0,386.7 1456.0,384.5 1457.9,382.3 1459.8,380.2 1461.7,378.3 1463.7,376.4 1465.6,374.6 1467.5,372.9 1469.4,371.3 1471.4,369.7 1473.3,368.2 1475.2,366.8 1477.2,365.4 1479.1,364.0 1486.8,359.1 1494.5,354.8 1502.2,351.0 1509.9,347.7 1517.6,344.7 1525.3,342.0 1533.0,339.5 1540.7,337.2 1548.5,335.2 1556.2,333.3 1563.9,331.5 1571.6,329.9 1579.3,328.3 1587.0,326.9 1594.7,325.6 1602.4,324.3 1610.1,323.2 1617.8,322.1 1625.5,321.0 1633.2,320.0 1640.9,319.1 1648.7,318.2 1656.4,317.3 1664.1,316.5 1671.8,315.8 1679.5,315.0 1687.2,314.3 1694.9,313.6 1702.6,313.0 1710.3,312.4 1718.0,311.8 1725.7,311.2 1733.4,310.6 1741.2,310.1 1748.9,309.6 1756.6,309.1 1764.3,308.6 1772.0,308.1 1779.7,307.7 1787.4,307.3" fill="none" stroke="#f0f020" stroke-width="3" stroke-linejoin="round"/>
<text x="386.0" y="549.9" font-size="34.3" fill="#f2f2f2" text-anchor="middle" textLength="209.0" lengthAdjust="spacingAndGlyphs" stroke="#f2f2f2" stroke-width="0.55">Avg dE2000: 1,9</text>
<text x="771.5" y="549.9" font-size="34.3" fill="#f2f2f2" text-anchor="middle" textLength="184.0" lengthAdjust="spacingAndGlyphs" stroke="#f2f2f2" stroke-width="0.55">Avg CCT: 7018</text>
<text x="1176.0" y="549.9" font-size="34.3" fill="#f2f2f2" text-anchor="middle" textLength="266.0" lengthAdjust="spacingAndGlyphs" stroke="#f2f2f2" stroke-width="0.55">Contrast Ratio: 1207</text>
<text x="1582.0" y="549.9" font-size="34.3" fill="#f2f2f2" text-anchor="middle" textLength="306.0" lengthAdjust="spacingAndGlyphs" stroke="#f2f2f2" stroke-width="0.55">Average Gamma: 2,216</text>
<rect x="198.0" y="572.5" width="1616.0" height="148.5" fill="#000000"/>
<text font-size="11.5" fill="#f0f0f0" font-weight="bold" transform="translate(303.5 624) rotate(-90)" textLength="39" lengthAdjust="spacingAndGlyphs">Actual</text>
<text font-size="11.5" fill="#f0f0f0" font-weight="bold" transform="translate(303.5 689) rotate(-90)" textLength="38.5" lengthAdjust="spacingAndGlyphs">Target</text>
<rect x="308.2" y="579.0" width="61.5" height="116.0" fill="rgb(0,0,0)"/>
<rect x="308.2" y="579.0" width="61.5" height="58.5" fill="rgb(5,7,12)" shape-rendering="crispEdges"/>
<rect x="308.95" y="579.75" width="60" height="114.3" fill="none" stroke="#ffffff" stroke-width="1.25"/>
<text x="338.9" y="711.7" font-size="12" fill="#f0f0f0" text-anchor="middle" textLength="6.5" lengthAdjust="spacingAndGlyphs" stroke="#f0f0f0" stroke-width="0.3">0</text>
<rect x="379.4" y="579.0" width="61.5" height="116.0" fill="rgb(13,13,13)"/>
<rect x="379.4" y="579.0" width="61.5" height="58.5" fill="rgb(9,10,12)" shape-rendering="crispEdges"/>
<rect x="380.17" y="579.75" width="60" height="114.3" fill="none" stroke="#ffffff" stroke-width="1.25"/>
<text x="410.2" y="711.7" font-size="12" fill="#f0f0f0" text-anchor="middle" textLength="6.5" lengthAdjust="spacingAndGlyphs" stroke="#f0f0f0" stroke-width="0.3">5</text>
<rect x="450.6" y="579.0" width="61.5" height="116.0" fill="rgb(26,26,26)"/>
<rect x="450.6" y="579.0" width="61.5" height="58.5" fill="rgb(21,21,24)" shape-rendering="crispEdges"/>
<rect x="451.39" y="579.75" width="60" height="114.3" fill="none" stroke="#ffffff" stroke-width="1.25"/>
<text x="481.4" y="711.7" font-size="12" fill="#f0f0f0" text-anchor="middle" textLength="13.0" lengthAdjust="spacingAndGlyphs" stroke="#f0f0f0" stroke-width="0.3">10</text>
<rect x="521.9" y="579.0" width="61.5" height="116.0" fill="rgb(38,38,38)"/>
<rect x="521.9" y="579.0" width="61.5" height="58.5" fill="rgb(33,34,36)" shape-rendering="crispEdges"/>
<rect x="522.61" y="579.75" width="60" height="114.3" fill="none" stroke="#ffffff" stroke-width="1.25"/>
<text x="552.6" y="711.7" font-size="12" fill="#f0f0f0" text-anchor="middle" textLength="13.0" lengthAdjust="spacingAndGlyphs" stroke="#f0f0f0" stroke-width="0.3">15</text>
<rect x="593.1" y="579.0" width="61.5" height="116.0" fill="rgb(51,51,51)"/>
<rect x="593.1" y="579.0" width="61.5" height="58.5" fill="rgb(46,48,50)" shape-rendering="crispEdges"/>
<rect x="593.83" y="579.75" width="60" height="114.3" fill="none" stroke="#ffffff" stroke-width="1.25"/>
<text x="623.8" y="711.7" font-size="12" fill="#f0f0f0" text-anchor="middle" textLength="13.0" lengthAdjust="spacingAndGlyphs" stroke="#f0f0f0" stroke-width="0.3">20</text>
<rect x="664.3" y="579.0" width="61.5" height="116.0" fill="rgb(64,64,64)"/>
<rect x="664.3" y="579.0" width="61.5" height="58.5" fill="rgb(59,60,63)" shape-rendering="crispEdges"/>
<rect x="665.05" y="579.75" width="60" height="114.3" fill="none" stroke="#ffffff" stroke-width="1.25"/>
<text x="695.0" y="711.7" font-size="12" fill="#f0f0f0" text-anchor="middle" textLength="13.0" lengthAdjust="spacingAndGlyphs" stroke="#f0f0f0" stroke-width="0.3">25</text>
<rect x="735.5" y="579.0" width="61.5" height="116.0" fill="rgb(76,76,76)"/>
<rect x="735.5" y="579.0" width="61.5" height="58.5" fill="rgb(71,73,76)" shape-rendering="crispEdges"/>
<rect x="736.27" y="579.75" width="60" height="114.3" fill="none" stroke="#ffffff" stroke-width="1.25"/>
<text x="766.3" y="711.7" font-size="12" fill="#f0f0f0" text-anchor="middle" textLength="13.0" lengthAdjust="spacingAndGlyphs" stroke="#f0f0f0" stroke-width="0.3">30</text>
<rect x="806.7" y="579.0" width="61.5" height="116.0" fill="rgb(89,89,89)"/>
<rect x="806.7" y="579.0" width="61.5" height="58.5" fill="rgb(83,86,89)" shape-rendering="crispEdges"/>
<rect x="807.49" y="579.75" width="60" height="114.3" fill="none" stroke="#ffffff" stroke-width="1.25"/>
<text x="837.5" y="711.7" font-size="12" fill="#f0f0f0" text-anchor="middle" textLength="13.0" lengthAdjust="spacingAndGlyphs" stroke="#f0f0f0" stroke-width="0.3">35</text>
<rect x="878.0" y="579.0" width="61.5" height="116.0" fill="rgb(102,102,102)"/>
<rect x="878.0" y="579.0" width="61.5" height="58.5" fill="rgb(96,99,103)" shape-rendering="crispEdges"/>
<rect x="878.71" y="579.75" width="60" height="114.3" fill="none" stroke="#ffffff" stroke-width="1.25"/>
<text x="908.7" y="711.7" font-size="12" fill="#f0f0f0" text-anchor="middle" textLength="13.0" lengthAdjust="spacingAndGlyphs" stroke="#f0f0f0" stroke-width="0.3">40</text>
<rect x="949.2" y="579.0" width="61.5" height="116.0" fill="rgb(115,115,115)"/>
<rect x="949.2" y="579.0" width="61.5" height="58.5" fill="rgb(109,113,116)" shape-rendering="crispEdges"/>
<rect x="949.93" y="579.75" width="60" height="114.3" fill="none" stroke="#ffffff" stroke-width="1.25"/>
<text x="979.9" y="711.7" font-size="12" fill="#f0f0f0" text-anchor="middle" textLength="13.0" lengthAdjust="spacingAndGlyphs" stroke="#f0f0f0" stroke-width="0.3">45</text>
<rect x="1020.4" y="579.0" width="61.5" height="116.0" fill="rgb(128,128,128)"/>
<rect x="1020.4" y="579.0" width="61.5" height="58.5" fill="rgb(122,126,130)" shape-rendering="crispEdges"/>
<rect x="1021.15" y="579.75" width="60" height="114.3" fill="none" stroke="#ffffff" stroke-width="1.25"/>
<text x="1051.2" y="711.7" font-size="12" fill="#f0f0f0" text-anchor="middle" textLength="13.0" lengthAdjust="spacingAndGlyphs" stroke="#f0f0f0" stroke-width="0.3">50</text>
<rect x="1091.6" y="579.0" width="61.5" height="116.0" fill="rgb(140,140,140)"/>
<rect x="1091.6" y="579.0" width="61.5" height="58.5" fill="rgb(134,138,142)" shape-rendering="crispEdges"/>
<rect x="1092.37" y="579.75" width="60" height="114.3" fill="none" stroke="#ffffff" stroke-width="1.25"/>
<text x="1122.4" y="711.7" font-size="12" fill="#f0f0f0" text-anchor="middle" textLength="13.0" lengthAdjust="spacingAndGlyphs" stroke="#f0f0f0" stroke-width="0.3">55</text>
<rect x="1162.8" y="579.0" width="61.5" height="116.0" fill="rgb(153,153,153)"/>
<rect x="1162.8" y="579.0" width="61.5" height="58.5" fill="rgb(146,151,155)" shape-rendering="crispEdges"/>
<rect x="1163.59" y="579.75" width="60" height="114.3" fill="none" stroke="#ffffff" stroke-width="1.25"/>
<text x="1193.6" y="711.7" font-size="12" fill="#f0f0f0" text-anchor="middle" textLength="13.0" lengthAdjust="spacingAndGlyphs" stroke="#f0f0f0" stroke-width="0.3">60</text>
<rect x="1234.1" y="579.0" width="61.5" height="116.0" fill="rgb(166,166,166)"/>
<rect x="1234.1" y="579.0" width="61.5" height="58.5" fill="rgb(158,163,168)" shape-rendering="crispEdges"/>
<rect x="1234.81" y="579.75" width="60" height="114.3" fill="none" stroke="#ffffff" stroke-width="1.25"/>
<text x="1264.8" y="711.7" font-size="12" fill="#f0f0f0" text-anchor="middle" textLength="13.0" lengthAdjust="spacingAndGlyphs" stroke="#f0f0f0" stroke-width="0.3">65</text>
<rect x="1305.3" y="579.0" width="61.5" height="116.0" fill="rgb(178,178,178)"/>
<rect x="1305.3" y="579.0" width="61.5" height="58.5" fill="rgb(170,175,180)" shape-rendering="crispEdges"/>
<rect x="1306.03" y="579.75" width="60" height="114.3" fill="none" stroke="#ffffff" stroke-width="1.25"/>
<text x="1336.0" y="711.7" font-size="12" fill="#f0f0f0" text-anchor="middle" textLength="13.0" lengthAdjust="spacingAndGlyphs" stroke="#f0f0f0" stroke-width="0.3">70</text>
<rect x="1376.5" y="579.0" width="61.5" height="116.0" fill="rgb(191,191,191)"/>
<rect x="1376.5" y="579.0" width="61.5" height="58.5" fill="rgb(182,188,193)" shape-rendering="crispEdges"/>
<rect x="1377.25" y="579.75" width="60" height="114.3" fill="none" stroke="#ffffff" stroke-width="1.25"/>
<text x="1407.2" y="711.7" font-size="12" fill="#f0f0f0" text-anchor="middle" textLength="13.0" lengthAdjust="spacingAndGlyphs" stroke="#f0f0f0" stroke-width="0.3">75</text>
<rect x="1447.7" y="579.0" width="61.5" height="116.0" fill="rgb(204,204,204)"/>
<rect x="1447.7" y="579.0" width="61.5" height="58.5" fill="rgb(195,201,206)" shape-rendering="crispEdges"/>
<rect x="1448.47" y="579.75" width="60" height="114.3" fill="none" stroke="#ffffff" stroke-width="1.25"/>
<text x="1478.5" y="711.7" font-size="12" fill="#f0f0f0" text-anchor="middle" textLength="13.0" lengthAdjust="spacingAndGlyphs" stroke="#f0f0f0" stroke-width="0.3">80</text>
<rect x="1518.9" y="579.0" width="61.5" height="116.0" fill="rgb(217,217,217)"/>
<rect x="1518.9" y="579.0" width="61.5" height="58.5" fill="rgb(207,214,219)" shape-rendering="crispEdges"/>
<rect x="1519.69" y="579.75" width="60" height="114.3" fill="none" stroke="#ffffff" stroke-width="1.25"/>
<text x="1549.7" y="711.7" font-size="12" fill="#f0f0f0" text-anchor="middle" textLength="13.0" lengthAdjust="spacingAndGlyphs" stroke="#f0f0f0" stroke-width="0.3">85</text>
<rect x="1590.2" y="579.0" width="61.5" height="116.0" fill="rgb(230,230,230)"/>
<rect x="1590.2" y="579.0" width="61.5" height="58.5" fill="rgb(220,227,232)" shape-rendering="crispEdges"/>
<rect x="1590.91" y="579.75" width="60" height="114.3" fill="none" stroke="#ffffff" stroke-width="1.25"/>
<text x="1620.9" y="711.7" font-size="12" fill="#f0f0f0" text-anchor="middle" textLength="13.0" lengthAdjust="spacingAndGlyphs" stroke="#f0f0f0" stroke-width="0.3">90</text>
<rect x="1661.4" y="579.0" width="61.5" height="116.0" fill="rgb(242,242,242)"/>
<rect x="1661.4" y="579.0" width="61.5" height="58.5" fill="rgb(231,238,244)" shape-rendering="crispEdges"/>
<rect x="1662.13" y="579.75" width="60" height="114.3" fill="none" stroke="#ffffff" stroke-width="1.25"/>
<text x="1692.1" y="711.7" font-size="12" fill="#f0f0f0" text-anchor="middle" textLength="13.0" lengthAdjust="spacingAndGlyphs" stroke="#f0f0f0" stroke-width="0.3">95</text>
<rect x="1732.6" y="579.0" width="61.5" height="116.0" fill="rgb(250,250,250)"/>
<rect x="1732.6" y="579.0" width="61.5" height="58.5" fill="rgb(240,248,252)" shape-rendering="crispEdges"/>
<rect x="1733.35" y="579.75" width="60" height="114.3" fill="none" stroke="#ffffff" stroke-width="1.25"/>
<text x="1763.4" y="711.7" font-size="12" fill="#f0f0f0" text-anchor="middle" textLength="19.5" lengthAdjust="spacingAndGlyphs" stroke="#f0f0f0" stroke-width="0.3">100</text>
<text x="219.4" y="796.3" font-size="33.5" fill="#f2f2f2" textLength="211.0" lengthAdjust="spacingAndGlyphs" stroke="#f2f2f2" stroke-width="0.55">Current Reading</text>
<text x="219.4" y="844.6" font-size="29.4" fill="#f2f2f2" textLength="98.3" lengthAdjust="spacingAndGlyphs" stroke="#f2f2f2" stroke-width="0.55">x: 0,3068</text>
<text x="363.5" y="844.6" font-size="29.4" fill="#f2f2f2" textLength="86.5" lengthAdjust="spacingAndGlyphs" stroke="#f2f2f2" stroke-width="0.55">y: 0,326</text>
<text x="219.4" y="882.9" font-size="29.4" fill="#f2f2f2" textLength="107.0" lengthAdjust="spacingAndGlyphs" stroke="#f2f2f2" stroke-width="0.55">u': 0,1949</text>
<text x="363.5" y="882.9" font-size="29.4" fill="#f2f2f2" textLength="106.0" lengthAdjust="spacingAndGlyphs" stroke="#f2f2f2" stroke-width="0.55">v': 0,4658</text>
<text x="219.4" y="921.9" font-size="29.4" fill="#f2f2f2" textLength="180.6" lengthAdjust="spacingAndGlyphs" stroke="#f2f2f2" stroke-width="0.55">cd/m²: 299,9339</text>
<text x="219.4" y="960.2" font-size="29.4" fill="#f2f2f2" textLength="148.5" lengthAdjust="spacingAndGlyphs" stroke="#f2f2f2" stroke-width="0.55">ΔE 2000: 3,09</text>
<text x="657.2" y="758.8" font-size="16.3" fill="#d8d8d8" text-anchor="middle" textLength="72.8" lengthAdjust="spacingAndGlyphs" stroke="#d8d8d8" stroke-width="0.25">CIE 1931 xy</text>
<linearGradient id="cieH" x1="0" x2="1" y1="0" y2="0"><stop offset="0" stop-color="#7af0d0"/><stop offset="0.5" stop-color="#e8ffe0"/><stop offset="1" stop-color="#ffd8a8"/></linearGradient>
<linearGradient id="cieB" x1="0" x2="1" y1="0" y2="0"><stop offset="0" stop-color="#a0c4ff"/><stop offset="0.5" stop-color="#f4d0ff"/><stop offset="1" stop-color="#ff88b0"/></linearGradient>
<linearGradient id="cieM" x1="0" x2="0" y1="0" y2="1"><stop offset="0" stop-color="#fff" stop-opacity="0"/><stop offset="0.5" stop-color="#fff" stop-opacity="1"/><stop offset="1" stop-color="#fff" stop-opacity="0"/></linearGradient>
<mask id="cieMask"><rect x="551.6" y="764" width="244.10000000000002" height="188.20000000000005" fill="url(#cieV)"/></mask>
<linearGradient id="cieV" x1="0" x2="0" y1="0" y2="1"><stop offset="0" stop-color="#fff"/><stop offset="1" stop-color="#000"/></linearGradient>
<radialGradient id="cieW" cx="0.5" cy="0.45" r="0.5"><stop offset="0" stop-color="#ffffff" stop-opacity="0.85"/><stop offset="1" stop-color="#ffffff" stop-opacity="0"/></radialGradient>
<linearGradient id="cs0" x1="0" x2="1" y1="0" y2="0"><stop offset="0.0" stop-color="rgb(128,255,193)"/><stop offset="0.25" stop-color="rgb(169,255,193)"/><stop offset="0.5" stop-color="rgb(217,255,201)"/><stop offset="0.75" stop-color="rgb(255,255,201)"/><stop offset="1.0" stop-color="rgb(255,228,180)"/></linearGradient>
<rect x="551.6" y="764" width="244.1" height="2" fill="url(#cs0)" shape-rendering="crispEdges"/>
<linearGradient id="cs1" x1="0" x2="1" y1="0" y2="0"><stop offset="0.0" stop-color="rgb(129,255,194)"/><stop offset="0.25" stop-color="rgb(170,255,194)"/><stop offset="0.5" stop-color="rgb(218,255,202)"/><stop offset="0.75" stop-color="rgb(255,255,203)"/><stop offset="1.0" stop-color="rgb(255,227,180)"/></linearGradient>
<rect x="551.6" y="766" width="244.1" height="2" fill="url(#cs1)" shape-rendering="crispEdges"/>
<linearGradient id="cs2" x1="0" x2="1" y1="0" y2="0"><stop offset="0.0" stop-color="rgb(130,255,195)"/><stop offset="0.25" stop-color="rgb(171,255,196)"/><stop offset="0.5" stop-color="rgb(219,255,204)"/><stop offset="0.75" stop-color="rgb(255,255,204)"/><stop offset="1.0" stop-color="rgb(255,226,180)"/></linearGradient>
<rect x="551.6" y="768" width="244.1" height="2" fill="url(#cs2)" shape-rendering="crispEdges"/>
<linearGradient id="cs3" x1="0" x2="1" y1="0" y2="0"><stop offset="0.0" stop-color="rgb(130,255,197)"/><stop offset="0.25" stop-color="rgb(173,255,197)"/><stop offset="0.5" stop-color="rgb(220,255,205)"/><stop offset="0.75" stop-color="rgb(255,255,206)"/><stop offset="1.0" stop-color="rgb(255,226,181)"/></linearGradient>
<rect x="551.6" y="770" width="244.1" height="2" fill="url(#cs3)" shape-rendering="crispEdges"/>
<linearGradient id="cs4" x1="0" x2="1" y1="0" y2="0"><stop offset="0.0" stop-color="rgb(131,255,198)"/><stop offset="0.25" stop-color="rgb(174,255,199)"/><stop offset="0.5" stop-color="rgb(221,255,207)"/><stop offset="0.75" stop-color="rgb(255,255,208)"/><stop offset="1.0" stop-color="rgb(255,225,181)"/></linearGradient>
<rect x="551.6" y="772" width="244.1" height="2" fill="url(#cs4)" shape-rendering="crispEdges"/>
<linearGradient id="cs5" x1="0" x2="1" y1="0" y2="0"><stop offset="0.0" stop-color="rgb(132,255,199)"/><stop offset="0.25" stop-color="rgb(175,255,200)"/><stop offset="0.5" stop-color="rgb(222,255,208)"/><stop offset="0.75" stop-color="rgb(255,255,209)"/><stop offset="1.0" stop-color="rgb(255,224,181)"/></linearGradient>
<rect x="551.6" y="774" width="244.1" height="2" fill="url(#cs5)" shape-rendering="crispEdges"/>
<linearGradient id="cs6" x1="0" x2="1" y1="0" y2="0"><stop offset="0.0" stop-color="rgb(132,255,201)"/><stop offset="0.25" stop-color="rgb(177,255,202)"/><stop offset="0.5" stop-color="rgb(223,255,210)"/><stop offset="0.75" stop-color="rgb(255,255,211)"/><stop offset="1.0" stop-color="rgb(255,224,181)"/></linearGradient>
<rect x="551.6" y="776" width="244.1" height="2" fill="url(#cs6)" shape-rendering="crispEdges"/>
<linearGradient id="cs7" x1="0" x2="1" y1="0" y2="0"><stop offset="0.0" stop-color="rgb(133,255,202)"/><stop offset="0.25" stop-color="rgb(178,255,203)"/><stop offset="0.5" stop-color="rgb(224,255,211)"/><stop offset="0.75" stop-color="rgb(255,255,213)"/><stop offset="1.0" stop-color="rgb(255,223,181)"/></linearGradient>
<rect x="551.6" y="778" width="244.1" height="2" fill="url(#cs7)" shape-rendering="crispEdges"/>
<linearGradient id="cs8" x1="0" x2="1" y1="0" y2="0"><stop offset="0.0" stop-color="rgb(134,255,204)"/><stop offset="0.25" stop-color="rgb(180,255,205)"/><stop offset="0.5" stop-color="rgb(225,255,213)"/><stop offset="0.75" stop-color="rgb(255,255,214)"/><stop offset="1.0" stop-color="rgb(255,222,181)"/></linearGradient>
<rect x="551.6" y="780" width="244.1" height="2" fill="url(#cs8)" shape-rendering="crispEdges"/>
<linearGradient id="cs9" x1="0" x2="1" y1="0" y2="0"><stop offset="0.0" stop-color="rgb(134,255,205)"/><stop offset="0.25" stop-color="rgb(181,255,207)"/><stop offset="0.5" stop-color="rgb(226,255,215)"/><stop offset="0.75" stop-color="rgb(255,255,216)"/><stop offset="1.0" stop-color="rgb(255,222,182)"/></linearGradient>
<rect x="551.6" y="782" width="244.1" height="2" fill="url(#cs9)" shape-rendering="crispEdges"/>
<linearGradient id="cs10" x1="0" x2="1" y1="0" y2="0"><stop offset="0.0" stop-color="rgb(135,255,206)"/><stop offset="0.25" stop-color="rgb(182,255,208)"/><stop offset="0.5" stop-color="rgb(227,255,216)"/><stop offset="0.75" stop-color="rgb(255,255,218)"/><stop offset="1.0" stop-color="rgb(255,221,182)"/></linearGradient>
<rect x="551.6" y="784" width="244.1" height="2" fill="url(#cs10)" shape-rendering="crispEdges"/>
<linearGradient id="cs11" x1="0" x2="1" y1="0" y2="0"><stop offset="0.0" stop-color="rgb(136,255,208)"/><stop offset="0.25" stop-color="rgb(184,255,210)"/><stop offset="0.5" stop-color="rgb(228,255,218)"/><stop offset="0.75" stop-color="rgb(255,255,220)"/><stop offset="1.0" stop-color="rgb(255,220,182)"/></linearGradient>
<rect x="551.6" y="786" width="244.1" height="2" fill="url(#cs11)" shape-rendering="crispEdges"/>
<linearGradient id="cs12" x1="0" x2="1" y1="0" y2="0"><stop offset="0.0" stop-color="rgb(137,255,209)"/><stop offset="0.25" stop-color="rgb(185,255,211)"/><stop offset="0.5" stop-color="rgb(229,255,219)"/><stop offset="0.75" stop-color="rgb(255,255,221)"/><stop offset="1.0" stop-color="rgb(255,219,182)"/></linearGradient>
<rect x="551.6" y="788" width="244.1" height="2" fill="url(#cs12)" shape-rendering="crispEdges"/>
<linearGradient id="cs13" x1="0" x2="1" y1="0" y2="0"><stop offset="0.0" stop-color="rgb(137,255,210)"/><stop offset="0.25" stop-color="rgb(186,255,213)"/><stop offset="0.5" stop-color="rgb(230,255,221)"/><stop offset="0.75" stop-color="rgb(255,255,223)"/><stop offset="1.0" stop-color="rgb(255,219,182)"/></linearGradient>
<rect x="551.6" y="790" width="244.1" height="2" fill="url(#cs13)" shape-rendering="crispEdges"/>
<linearGradient id="cs14" x1="0" x2="1" y1="0" y2="0"><stop offset="0.0" stop-color="rgb(138,255,212)"/><stop offset="0.25" stop-color="rgb(188,255,214)"/><stop offset="0.5" stop-color="rgb(231,255,222)"/><stop offset="0.75" stop-color="rgb(255,255,225)"/><stop offset="1.0" stop-color="rgb(255,218,182)"/></linearGradient>
<rect x="551.6" y="792" width="244.1" height="2" fill="url(#cs14)" shape-rendering="crispEdges"/>
<linearGradient id="cs15" x1="0" x2="1" y1="0" y2="0"><stop offset="0.0" stop-color="rgb(139,255,213)"/><stop offset="0.25" stop-color="rgb(189,255,216)"/><stop offset="0.5" stop-color="rgb(232,255,224)"/><stop offset="0.75" stop-color="rgb(255,255,226)"/><stop offset="1.0" stop-color="rgb(255,217,183)"/></linearGradient>
<rect x="551.6" y="794" width="244.1" height="2" fill="url(#cs15)" shape-rendering="crispEdges"/>
<linearGradient id="cs16" x1="0" x2="1" y1="0" y2="0"><stop offset="0.0" stop-color="rgb(139,255,214)"/><stop offset="0.25" stop-color="rgb(190,255,217)"/><stop offset="0.5" stop-color="rgb(233,255,225)"/><stop offset="0.75" stop-color="rgb(255,255,228)"/><stop offset="1.0" stop-color="rgb(255,217,183)"/></linearGradient>
<rect x="551.6" y="796" width="244.1" height="2" fill="url(#cs16)" shape-rendering="crispEdges"/>
<linearGradient id="cs17" x1="0" x2="1" y1="0" y2="0"><stop offset="0.0" stop-color="rgb(140,255,216)"/><stop offset="0.25" stop-color="rgb(192,255,219)"/><stop offset="0.5" stop-color="rgb(234,255,227)"/><stop offset="0.75" stop-color="rgb(255,255,230)"/><stop offset="1.0" stop-color="rgb(255,216,183)"/></linearGradient>
<rect x="551.6" y="798" width="244.1" height="2" fill="url(#cs17)" shape-rendering="crispEdges"/>
<linearGradient id="cs18" x1="0" x2="1" y1="0" y2="0"><stop offset="0.0" stop-color="rgb(141,255,217)"/><stop offset="0.25" stop-color="rgb(193,255,220)"/><stop offset="0.5" stop-color="rgb(235,255,228)"/><stop offset="0.75" stop-color="rgb(255,255,231)"/><stop offset="1.0" stop-color="rgb(255,215,183)"/></linearGradient>
<rect x="551.6" y="800" width="244.1" height="2" fill="url(#cs18)" shape-rendering="crispEdges"/>
<linearGradient id="cs19" x1="0" x2="1" y1="0" y2="0"><stop offset="0.0" stop-color="rgb(141,255,219)"/><stop offset="0.25" stop-color="rgb(195,255,222)"/><stop offset="0.5" stop-color="rgb(236,255,230)"/><stop offset="0.75" stop-color="rgb(255,255,233)"/><stop offset="1.0" stop-color="rgb(255,215,183)"/></linearGradient>
<rect x="551.6" y="802" width="244.1" height="2" fill="url(#cs19)" shape-rendering="crispEdges"/>
<linearGradient id="cs20" x1="0" x2="1" y1="0" y2="0"><stop offset="0.0" stop-color="rgb(142,255,220)"/><stop offset="0.25" stop-color="rgb(196,255,223)"/><stop offset="0.5" stop-color="rgb(237,255,231)"/><stop offset="0.75" stop-color="rgb(255,255,235)"/><stop offset="1.0" stop-color="rgb(255,214,183)"/></linearGradient>
<rect x="551.6" y="804" width="244.1" height="2" fill="url(#cs20)" shape-rendering="crispEdges"/>
<linearGradient id="cs21" x1="0" x2="1" y1="0" y2="0"><stop offset="0.0" stop-color="rgb(143,255,221)"/><stop offset="0.25" stop-color="rgb(197,255,225)"/><stop offset="0.5" stop-color="rgb(238,255,233)"/><stop offset="0.75" stop-color="rgb(255,255,237)"/><stop offset="1.0" stop-color="rgb(255,213,184)"/></linearGradient>
<rect x="551.6" y="806" width="244.1" height="2" fill="url(#cs21)" shape-rendering="crispEdges"/>
<linearGradient id="cs22" x1="0" x2="1" y1="0" y2="0"><stop offset="0.0" stop-color="rgb(143,255,223)"/><stop offset="0.25" stop-color="rgb(199,255,226)"/><stop offset="0.5" stop-color="rgb(239,255,234)"/><stop offset="0.75" stop-color="rgb(255,255,238)"/><stop offset="1.0" stop-color="rgb(255,213,184)"/></linearGradient>
<rect x="551.6" y="808" width="244.1" height="2" fill="url(#cs22)" shape-rendering="crispEdges"/>
<linearGradient id="cs23" x1="0" x2="1" y1="0" y2="0"><stop offset="0.0" stop-color="rgb(144,255,224)"/><stop offset="0.25" stop-color="rgb(200,255,228)"/><stop offset="0.5" stop-color="rgb(240,255,236)"/><stop offset="0.75" stop-color="rgb(255,255,240)"/><stop offset="1.0" stop-color="rgb(255,212,184)"/></linearGradient>
<rect x="551.6" y="810" width="244.1" height="2" fill="url(#cs23)" shape-rendering="crispEdges"/>
<linearGradient id="cs24" x1="0" x2="1" y1="0" y2="0"><stop offset="0.0" stop-color="rgb(145,255,225)"/><stop offset="0.25" stop-color="rgb(201,255,229)"/><stop offset="0.5" stop-color="rgb(241,255,237)"/><stop offset="0.75" stop-color="rgb(255,254,240)"/><stop offset="1.0" stop-color="rgb(255,211,184)"/></linearGradient>
<rect x="551.6" y="812" width="244.1" height="2" fill="url(#cs24)" shape-rendering="crispEdges"/>
<linearGradient id="cs25" x1="0" x2="1" y1="0" y2="0"><stop offset="0.0" stop-color="rgb(145,255,227)"/><stop offset="0.25" stop-color="rgb(201,255,230)"/><stop offset="0.5" stop-color="rgb(241,255,238)"/><stop offset="0.75" stop-color="rgb(255,253,239)"/><stop offset="1.0" stop-color="rgb(255,210,184)"/></linearGradient>
<rect x="551.6" y="814" width="244.1" height="2" fill="url(#cs25)" shape-rendering="crispEdges"/>
<linearGradient id="cs26" x1="0" x2="1" y1="0" y2="0"><stop offset="0.0" stop-color="rgb(146,255,228)"/><stop offset="0.25" stop-color="rgb(202,255,231)"/><stop offset="0.5" stop-color="rgb(242,255,238)"/><stop offset="0.75" stop-color="rgb(255,252,239)"/><stop offset="1.0" stop-color="rgb(255,208,184)"/></linearGradient>
<rect x="551.6" y="816" width="244.1" height="2" fill="url(#cs26)" shape-rendering="crispEdges"/>
<linearGradient id="cs27" x1="0" x2="1" y1="0" y2="0"><stop offset="0.0" stop-color="rgb(147,255,229)"/><stop offset="0.25" stop-color="rgb(203,255,233)"/><stop offset="0.5" stop-color="rgb(243,255,239)"/><stop offset="0.75" stop-color="rgb(255,251,239)"/><stop offset="1.0" stop-color="rgb(255,207,184)"/></linearGradient>
<rect x="551.6" y="818" width="244.1" height="2" fill="url(#cs27)" shape-rendering="crispEdges"/>
<linearGradient id="cs28" x1="0" x2="1" y1="0" y2="0"><stop offset="0.0" stop-color="rgb(147,255,231)"/><stop offset="0.25" stop-color="rgb(203,255,234)"/><stop offset="0.5" stop-color="rgb(243,255,240)"/><stop offset="0.75" stop-color="rgb(255,251,239)"/><stop offset="1.0" stop-color="rgb(255,206,184)"/></linearGradient>
<rect x="551.6" y="820" width="244.1" height="2" fill="url(#cs28)" shape-rendering="crispEdges"/>
<linearGradient id="cs29" x1="0" x2="1" y1="0" y2="0"><stop offset="0.0" stop-color="rgb(148,255,232)"/><stop offset="0.25" stop-color="rgb(204,255,235)"/><stop offset="0.5" stop-color="rgb(244,255,241)"/><stop offset="0.75" stop-color="rgb(255,250,238)"/><stop offset="1.0" stop-color="rgb(255,205,184)"/></linearGradient>
<rect x="551.6" y="822" width="244.1" height="2" fill="url(#cs29)" shape-rendering="crispEdges"/>
<linearGradient id="cs30" x1="0" x2="1" y1="0" y2="0"><stop offset="0.0" stop-color="rgb(149,255,233)"/><stop offset="0.25" stop-color="rgb(205,255,236)"/><stop offset="0.5" stop-color="rgb(244,255,242)"/><stop offset="0.75" stop-color="rgb(255,249,238)"/><stop offset="1.0" stop-color="rgb(255,204,184)"/></linearGradient>
<rect x="551.6" y="824" width="244.1" height="2" fill="url(#cs30)" shape-rendering="crispEdges"/>
<linearGradient id="cs31" x1="0" x2="1" y1="0" y2="0"><stop offset="0.0" stop-color="rgb(149,255,235)"/><stop offset="0.25" stop-color="rgb(205,255,237)"/><stop offset="0.5" stop-color="rgb(245,255,242)"/><stop offset="0.75" stop-color="rgb(255,248,238)"/><stop offset="1.0" stop-color="rgb(255,202,184)"/></linearGradient>
<rect x="551.6" y="826" width="244.1" height="2" fill="url(#cs31)" shape-rendering="crispEdges"/>
<linearGradient id="cs32" x1="0" x2="1" y1="0" y2="0"><stop offset="0.0" stop-color="rgb(150,255,236)"/><stop offset="0.25" stop-color="rgb(206,255,238)"/><stop offset="0.5" stop-color="rgb(246,255,243)"/><stop offset="0.75" stop-color="rgb(255,247,238)"/><stop offset="1.0" stop-color="rgb(255,201,184)"/></linearGradient>
<rect x="551.6" y="828" width="244.1" height="2" fill="url(#cs32)" shape-rendering="crispEdges"/>
<linearGradient id="cs33" x1="0" x2="1" y1="0" y2="0"><stop offset="0.0" stop-color="rgb(151,255,237)"/><stop offset="0.25" stop-color="rgb(207,255,239)"/><stop offset="0.5" stop-color="rgb(246,255,244)"/><stop offset="0.75" stop-color="rgb(255,246,237)"/><stop offset="1.0" stop-color="rgb(255,200,184)"/></linearGradient>
<rect x="551.6" y="830" width="244.1" height="2" fill="url(#cs33)" shape-rendering="crispEdges"/>
<linearGradient id="cs34" x1="0" x2="1" y1="0" y2="0"><stop offset="0.0" stop-color="rgb(151,255,239)"/><stop offset="0.25" stop-color="rgb(207,255,241)"/><stop offset="0.5" stop-color="rgb(247,255,245)"/><stop offset="0.75" stop-color="rgb(255,245,237)"/><stop offset="1.0" stop-color="rgb(255,199,184)"/></linearGradient>
<rect x="551.6" y="832" width="244.1" height="2" fill="url(#cs34)" shape-rendering="crispEdges"/>
<linearGradient id="cs35" x1="0" x2="1" y1="0" y2="0"><stop offset="0.0" stop-color="rgb(152,255,240)"/><stop offset="0.25" stop-color="rgb(208,255,242)"/><stop offset="0.5" stop-color="rgb(248,255,246)"/><stop offset="0.75" stop-color="rgb(255,244,237)"/><stop offset="1.0" stop-color="rgb(255,198,184)"/></linearGradient>
<rect x="551.6" y="834" width="244.1" height="2" fill="url(#cs35)" shape-rendering="crispEdges"/>
<linearGradient id="cs36" x1="0" x2="1" y1="0" y2="0"><stop offset="0.0" stop-color="rgb(153,255,241)"/><stop offset="0.25" stop-color="rgb(209,255,243)"/><stop offset="0.5" stop-color="rgb(248,255,247)"/><stop offset="0.75" stop-color="rgb(255,243,237)"/><stop offset="1.0" stop-color="rgb(255,197,184)"/></linearGradient>
<rect x="551.6" y="836" width="244.1" height="2" fill="url(#cs36)" shape-rendering="crispEdges"/>
<linearGradient id="cs37" x1="0" x2="1" y1="0" y2="0"><stop offset="0.0" stop-color="rgb(154,255,242)"/><stop offset="0.25" stop-color="rgb(210,255,244)"/><stop offset="0.5" stop-color="rgb(249,255,247)"/><stop offset="0.75" stop-color="rgb(255,242,236)"/><stop offset="1.0" stop-color="rgb(255,195,184)"/></linearGradient>
<rect x="551.6" y="838" width="244.1" height="2" fill="url(#cs37)" shape-rendering="crispEdges"/>
<linearGradient id="cs38" x1="0" x2="1" y1="0" y2="0"><stop offset="0.0" stop-color="rgb(154,255,244)"/><stop offset="0.25" stop-color="rgb(210,255,245)"/><stop offset="0.5" stop-color="rgb(250,255,248)"/><stop offset="0.75" stop-color="rgb(255,242,236)"/><stop offset="1.0" stop-color="rgb(255,194,184)"/></linearGradient>
<rect x="551.6" y="840" width="244.1" height="2" fill="url(#cs38)" shape-rendering="crispEdges"/>
<linearGradient id="cs39" x1="0" x2="1" y1="0" y2="0"><stop offset="0.0" stop-color="rgb(155,255,245)"/><stop offset="0.25" stop-color="rgb(211,255,246)"/><stop offset="0.5" stop-color="rgb(250,255,249)"/><stop offset="0.75" stop-color="rgb(255,241,236)"/><stop offset="1.0" stop-color="rgb(255,193,184)"/></linearGradient>
<rect x="551.6" y="842" width="244.1" height="2" fill="url(#cs39)" shape-rendering="crispEdges"/>
<linearGradient id="cs40" x1="0" x2="1" y1="0" y2="0"><stop offset="0.0" stop-color="rgb(156,255,246)"/><stop offset="0.25" stop-color="rgb(212,255,248)"/><stop offset="0.5" stop-color="rgb(251,255,250)"/><stop offset="0.75" stop-color="rgb(255,240,236)"/><stop offset="1.0" stop-color="rgb(255,192,184)"/></linearGradient>
<rect x="551.6" y="844" width="244.1" height="2" fill="url(#cs40)" shape-rendering="crispEdges"/>
<linearGradient id="cs41" x1="0" x2="1" y1="0" y2="0"><stop offset="0.0" stop-color="rgb(156,255,248)"/><stop offset="0.25" stop-color="rgb(212,255,249)"/><stop offset="0.5" stop-color="rgb(251,255,251)"/><stop offset="0.75" stop-color="rgb(255,239,235)"/><stop offset="1.0" stop-color="rgb(255,191,184)"/></linearGradient>
<rect x="551.6" y="846" width="244.1" height="2" fill="url(#cs41)" shape-rendering="crispEdges"/>
<linearGradient id="cs42" x1="0" x2="1" y1="0" y2="0"><stop offset="0.0" stop-color="rgb(157,255,249)"/><stop offset="0.25" stop-color="rgb(213,255,250)"/><stop offset="0.5" stop-color="rgb(252,255,251)"/><stop offset="0.75" stop-color="rgb(255,238,235)"/><stop offset="1.0" stop-color="rgb(255,189,184)"/></linearGradient>
<rect x="551.6" y="848" width="244.1" height="2" fill="url(#cs42)" shape-rendering="crispEdges"/>
<linearGradient id="cs43" x1="0" x2="1" y1="0" y2="0"><stop offset="0.0" stop-color="rgb(158,255,250)"/><stop offset="0.25" stop-color="rgb(214,255,251)"/><stop offset="0.5" stop-color="rgb(253,255,252)"/><stop offset="0.75" stop-color="rgb(255,237,235)"/><stop offset="1.0" stop-color="rgb(255,188,184)"/></linearGradient>
<rect x="551.6" y="850" width="244.1" height="2" fill="url(#cs43)" shape-rendering="crispEdges"/>
<linearGradient id="cs44" x1="0" x2="1" y1="0" y2="0"><stop offset="0.0" stop-color="rgb(158,255,252)"/><stop offset="0.25" stop-color="rgb(214,255,252)"/><stop offset="0.5" stop-color="rgb(253,255,253)"/><stop offset="0.75" stop-color="rgb(255,236,235)"/><stop offset="1.0" stop-color="rgb(255,187,184)"/></linearGradient>
<rect x="551.6" y="852" width="244.1" height="2" fill="url(#cs44)" shape-rendering="crispEdges"/>
<linearGradient id="cs45" x1="0" x2="1" y1="0" y2="0"><stop offset="0.0" stop-color="rgb(159,255,253)"/><stop offset="0.25" stop-color="rgb(215,255,253)"/><stop offset="0.5" stop-color="rgb(254,255,254)"/><stop offset="0.75" stop-color="rgb(255,235,234)"/><stop offset="1.0" stop-color="rgb(255,186,184)"/></linearGradient>
<rect x="551.6" y="854" width="244.1" height="2" fill="url(#cs45)" shape-rendering="crispEdges"/>
<linearGradient id="cs46" x1="0" x2="1" y1="0" y2="0"><stop offset="0.0" stop-color="rgb(160,255,254)"/><stop offset="0.25" stop-color="rgb(216,255,254)"/><stop offset="0.5" stop-color="rgb(255,255,255)"/><stop offset="0.75" stop-color="rgb(255,234,234)"/><stop offset="1.0" stop-color="rgb(255,185,184)"/></linearGradient>
<rect x="551.6" y="856" width="244.1" height="2" fill="url(#cs46)" shape-rendering="crispEdges"/>
<linearGradient id="cs47" x1="0" x2="1" y1="0" y2="0"><stop offset="0.0" stop-color="rgb(160,254,255)"/><stop offset="0.25" stop-color="rgb(216,255,255)"/><stop offset="0.5" stop-color="rgb(255,255,255)"/><stop offset="0.75" stop-color="rgb(255,234,234)"/><stop offset="1.0" stop-color="rgb(255,184,184)"/></linearGradient>
<rect x="551.6" y="858" width="244.1" height="2" fill="url(#cs47)" shape-rendering="crispEdges"/>
<linearGradient id="cs48" x1="0" x2="1" y1="0" y2="0"><stop offset="0.0" stop-color="rgb(161,253,255)"/><stop offset="0.25" stop-color="rgb(217,254,255)"/><stop offset="0.5" stop-color="rgb(255,254,255)"/><stop offset="0.75" stop-color="rgb(255,233,234)"/><stop offset="1.0" stop-color="rgb(255,183,185)"/></linearGradient>
<rect x="551.6" y="860" width="244.1" height="2" fill="url(#cs48)" shape-rendering="crispEdges"/>
<linearGradient id="cs49" x1="0" x2="1" y1="0" y2="0"><stop offset="0.0" stop-color="rgb(161,252,255)"/><stop offset="0.25" stop-color="rgb(217,253,255)"/><stop offset="0.5" stop-color="rgb(255,253,255)"/><stop offset="0.75" stop-color="rgb(255,232,234)"/><stop offset="1.0" stop-color="rgb(255,182,185)"/></linearGradient>
<rect x="551.6" y="862" width="244.1" height="2" fill="url(#cs49)" shape-rendering="crispEdges"/>
<linearGradient id="cs50" x1="0" x2="1" y1="0" y2="0"><stop offset="0.0" stop-color="rgb(161,251,255)"/><stop offset="0.25" stop-color="rgb(217,253,255)"/><stop offset="0.5" stop-color="rgb(255,253,255)"/><stop offset="0.75" stop-color="rgb(255,231,234)"/><stop offset="1.0" stop-color="rgb(255,182,185)"/></linearGradient>
<rect x="551.6" y="864" width="244.1" height="2" fill="url(#cs50)" shape-rendering="crispEdges"/>
<linearGradient id="cs51" x1="0" x2="1" y1="0" y2="0"><stop offset="0.0" stop-color="rgb(162,250,255)"/><stop offset="0.25" stop-color="rgb(218,252,255)"/><stop offset="0.5" stop-color="rgb(255,252,255)"/><stop offset="0.75" stop-color="rgb(255,230,234)"/><stop offset="1.0" stop-color="rgb(255,181,186)"/></linearGradient>
<rect x="551.6" y="866" width="244.1" height="2" fill="url(#cs51)" shape-rendering="crispEdges"/>
<linearGradient id="cs52" x1="0" x2="1" y1="0" y2="0"><stop offset="0.0" stop-color="rgb(162,249,255)"/><stop offset="0.25" stop-color="rgb(218,251,255)"/><stop offset="0.5" stop-color="rgb(255,251,255)"/><stop offset="0.75" stop-color="rgb(255,229,234)"/><stop offset="1.0" stop-color="rgb(255,180,186)"/></linearGradient>
<rect x="551.6" y="868" width="244.1" height="2" fill="url(#cs52)" shape-rendering="crispEdges"/>
<linearGradient id="cs53" x1="0" x2="1" y1="0" y2="0"><stop offset="0.0" stop-color="rgb(162,248,255)"/><stop offset="0.25" stop-color="rgb(218,251,255)"/><stop offset="0.5" stop-color="rgb(255,251,255)"/><stop offset="0.75" stop-color="rgb(255,228,233)"/><stop offset="1.0" stop-color="rgb(255,180,186)"/></linearGradient>
<rect x="551.6" y="870" width="244.1" height="2" fill="url(#cs53)" shape-rendering="crispEdges"/>
<linearGradient id="cs54" x1="0" x2="1" y1="0" y2="0"><stop offset="0.0" stop-color="rgb(163,246,255)"/><stop offset="0.25" stop-color="rgb(219,250,255)"/><stop offset="0.5" stop-color="rgb(255,250,255)"/><stop offset="0.75" stop-color="rgb(255,227,233)"/><stop offset="1.0" stop-color="rgb(255,179,187)"/></linearGradient>
<rect x="551.6" y="872" width="244.1" height="2" fill="url(#cs54)" shape-rendering="crispEdges"/>
<linearGradient id="cs55" x1="0" x2="1" y1="0" y2="0"><stop offset="0.0" stop-color="rgb(163,245,255)"/><stop offset="0.25" stop-color="rgb(219,250,255)"/><stop offset="0.5" stop-color="rgb(255,250,255)"/><stop offset="0.75" stop-color="rgb(255,226,233)"/><stop offset="1.0" stop-color="rgb(255,178,187)"/></linearGradient>
<rect x="551.6" y="874" width="244.1" height="2" fill="url(#cs55)" shape-rendering="crispEdges"/>
<linearGradient id="cs56" x1="0" x2="1" y1="0" y2="0"><stop offset="0.0" stop-color="rgb(163,244,255)"/><stop offset="0.25" stop-color="rgb(219,249,255)"/><stop offset="0.5" stop-color="rgb(255,249,255)"/><stop offset="0.75" stop-color="rgb(255,225,233)"/><stop offset="1.0" stop-color="rgb(255,178,187)"/></linearGradient>
<rect x="551.6" y="876" width="244.1" height="2" fill="url(#cs56)" shape-rendering="crispEdges"/>
<linearGradient id="cs57" x1="0" x2="1" y1="0" y2="0"><stop offset="0.0" stop-color="rgb(164,243,255)"/><stop offset="0.25" stop-color="rgb(220,248,255)"/><stop offset="0.5" stop-color="rgb(255,248,255)"/><stop offset="0.75" stop-color="rgb(255,224,233)"/><stop offset="1.0" stop-color="rgb(255,177,188)"/></linearGradient>
<rect x="551.6" y="878" width="244.1" height="2" fill="url(#cs57)" shape-rendering="crispEdges"/>
<linearGradient id="cs58" x1="0" x2="1" y1="0" y2="0"><stop offset="0.0" stop-color="rgb(164,242,255)"/><stop offset="0.25" stop-color="rgb(220,248,255)"/><stop offset="0.5" stop-color="rgb(255,248,255)"/><stop offset="0.75" stop-color="rgb(255,223,233)"/><stop offset="1.0" stop-color="rgb(255,176,188)"/></linearGradient>
<rect x="551.6" y="880" width="244.1" height="2" fill="url(#cs58)" shape-rendering="crispEdges"/>
<linearGradient id="cs59" x1="0" x2="1" y1="0" y2="0"><stop offset="0.0" stop-color="rgb(164,241,255)"/><stop offset="0.25" stop-color="rgb(220,247,255)"/><stop offset="0.5" stop-color="rgb(255,247,255)"/><stop offset="0.75" stop-color="rgb(255,222,233)"/><stop offset="1.0" stop-color="rgb(255,175,188)"/></linearGradient>
<rect x="551.6" y="882" width="244.1" height="2" fill="url(#cs59)" shape-rendering="crispEdges"/>
<linearGradient id="cs60" x1="0" x2="1" y1="0" y2="0"><stop offset="0.0" stop-color="rgb(165,239,255)"/><stop offset="0.25" stop-color="rgb(221,246,255)"/><stop offset="0.5" stop-color="rgb(255,246,255)"/><stop offset="0.75" stop-color="rgb(255,221,233)"/><stop offset="1.0" stop-color="rgb(255,175,189)"/></linearGradient>
<rect x="551.6" y="884" width="244.1" height="2" fill="url(#cs60)" shape-rendering="crispEdges"/>
<linearGradient id="cs61" x1="0" x2="1" y1="0" y2="0"><stop offset="0.0" stop-color="rgb(165,238,255)"/><stop offset="0.25" stop-color="rgb(221,246,255)"/><stop offset="0.5" stop-color="rgb(255,246,255)"/><stop offset="0.75" stop-color="rgb(255,220,233)"/><stop offset="1.0" stop-color="rgb(255,174,189)"/></linearGradient>
<rect x="551.6" y="886" width="244.1" height="2" fill="url(#cs61)" shape-rendering="crispEdges"/>
<linearGradient id="cs62" x1="0" x2="1" y1="0" y2="0"><stop offset="0.0" stop-color="rgb(165,237,255)"/><stop offset="0.25" stop-color="rgb(221,245,255)"/><stop offset="0.5" stop-color="rgb(255,245,255)"/><stop offset="0.75" stop-color="rgb(255,219,233)"/><stop offset="1.0" stop-color="rgb(255,173,189)"/></linearGradient>
<rect x="551.6" y="888" width="244.1" height="2" fill="url(#cs62)" shape-rendering="crispEdges"/>
<linearGradient id="cs63" x1="0" x2="1" y1="0" y2="0"><stop offset="0.0" stop-color="rgb(166,236,255)"/><stop offset="0.25" stop-color="rgb(222,244,255)"/><stop offset="0.5" stop-color="rgb(255,244,255)"/><stop offset="0.75" stop-color="rgb(255,219,233)"/><stop offset="1.0" stop-color="rgb(255,173,190)"/></linearGradient>
<rect x="551.6" y="890" width="244.1" height="2" fill="url(#cs63)" shape-rendering="crispEdges"/>
<linearGradient id="cs64" x1="0" x2="1" y1="0" y2="0"><stop offset="0.0" stop-color="rgb(166,235,255)"/><stop offset="0.25" stop-color="rgb(222,244,255)"/><stop offset="0.5" stop-color="rgb(255,244,255)"/><stop offset="0.75" stop-color="rgb(255,218,233)"/><stop offset="1.0" stop-color="rgb(255,172,190)"/></linearGradient>
<rect x="551.6" y="892" width="244.1" height="2" fill="url(#cs64)" shape-rendering="crispEdges"/>
<linearGradient id="cs65" x1="0" x2="1" y1="0" y2="0"><stop offset="0.0" stop-color="rgb(166,234,255)"/><stop offset="0.25" stop-color="rgb(222,243,255)"/><stop offset="0.5" stop-color="rgb(255,243,255)"/><stop offset="0.75" stop-color="rgb(255,217,232)"/><stop offset="1.0" stop-color="rgb(255,171,190)"/></linearGradient>
<rect x="551.6" y="894" width="244.1" height="2" fill="url(#cs65)" shape-rendering="crispEdges"/>
<linearGradient id="cs66" x1="0" x2="1" y1="0" y2="0"><stop offset="0.0" stop-color="rgb(167,233,255)"/><stop offset="0.25" stop-color="rgb(223,243,255)"/><stop offset="0.5" stop-color="rgb(255,243,255)"/><stop offset="0.75" stop-color="rgb(255,216,232)"/><stop offset="1.0" stop-color="rgb(255,171,191)"/></linearGradient>
<rect x="551.6" y="896" width="244.1" height="2" fill="url(#cs66)" shape-rendering="crispEdges"/>
<linearGradient id="cs67" x1="0" x2="1" y1="0" y2="0"><stop offset="0.0" stop-color="rgb(167,231,255)"/><stop offset="0.25" stop-color="rgb(223,242,255)"/><stop offset="0.5" stop-color="rgb(255,242,255)"/><stop offset="0.75" stop-color="rgb(255,215,232)"/><stop offset="1.0" stop-color="rgb(255,170,191)"/></linearGradient>
<rect x="551.6" y="898" width="244.1" height="2" fill="url(#cs67)" shape-rendering="crispEdges"/>
<linearGradient id="cs68" x1="0" x2="1" y1="0" y2="0"><stop offset="0.0" stop-color="rgb(167,230,255)"/><stop offset="0.25" stop-color="rgb(223,241,255)"/><stop offset="0.5" stop-color="rgb(255,241,255)"/><stop offset="0.75" stop-color="rgb(255,214,232)"/><stop offset="1.0" stop-color="rgb(255,169,191)"/></linearGradient>
<rect x="551.6" y="900" width="244.1" height="2" fill="url(#cs68)" shape-rendering="crispEdges"/>
<linearGradient id="cs69" x1="0" x2="1" y1="0" y2="0"><stop offset="0.0" stop-color="rgb(168,229,255)"/><stop offset="0.25" stop-color="rgb(224,241,255)"/><stop offset="0.5" stop-color="rgb(255,241,255)"/><stop offset="0.75" stop-color="rgb(255,213,232)"/><stop offset="1.0" stop-color="rgb(255,169,192)"/></linearGradient>
<rect x="551.6" y="902" width="244.1" height="2" fill="url(#cs69)" shape-rendering="crispEdges"/>
<linearGradient id="cs70" x1="0" x2="1" y1="0" y2="0"><stop offset="0.0" stop-color="rgb(168,228,255)"/><stop offset="0.25" stop-color="rgb(224,240,255)"/><stop offset="0.5" stop-color="rgb(255,240,255)"/><stop offset="0.75" stop-color="rgb(255,212,232)"/><stop offset="1.0" stop-color="rgb(255,168,192)"/></linearGradient>
<rect x="551.6" y="904" width="244.1" height="2" fill="url(#cs70)" shape-rendering="crispEdges"/>
<linearGradient id="cs71" x1="0" x2="1" y1="0" y2="0"><stop offset="0.0" stop-color="rgb(168,227,255)"/><stop offset="0.25" stop-color="rgb(223,238,255)"/><stop offset="0.5" stop-color="rgb(255,239,255)"/><stop offset="0.75" stop-color="rgb(255,211,231)"/><stop offset="1.0" stop-color="rgb(255,167,192)"/></linearGradient>
<rect x="551.6" y="906" width="244.1" height="2" fill="url(#cs71)" shape-rendering="crispEdges"/>
<linearGradient id="cs72" x1="0" x2="1" y1="0" y2="0"><stop offset="0.0" stop-color="rgb(168,226,255)"/><stop offset="0.25" stop-color="rgb(223,237,255)"/><stop offset="0.5" stop-color="rgb(254,237,255)"/><stop offset="0.75" stop-color="rgb(255,209,231)"/><stop offset="1.0" stop-color="rgb(255,166,192)"/></linearGradient>
<rect x="551.6" y="908" width="244.1" height="2" fill="url(#cs72)" shape-rendering="crispEdges"/>
<linearGradient id="cs73" x1="0" x2="1" y1="0" y2="0"><stop offset="0.0" stop-color="rgb(168,224,255)"/><stop offset="0.25" stop-color="rgb(222,235,255)"/><stop offset="0.5" stop-color="rgb(254,236,255)"/><stop offset="0.75" stop-color="rgb(255,208,230)"/><stop offset="1.0" stop-color="rgb(255,165,192)"/></linearGradient>
<rect x="551.6" y="910" width="244.1" height="2" fill="url(#cs73)" shape-rendering="crispEdges"/>
<linearGradient id="cs74" x1="0" x2="1" y1="0" y2="0"><stop offset="0.0" stop-color="rgb(168,223,255)"/><stop offset="0.25" stop-color="rgb(222,234,255)"/><stop offset="0.5" stop-color="rgb(254,235,255)"/><stop offset="0.75" stop-color="rgb(255,207,229)"/><stop offset="1.0" stop-color="rgb(255,164,192)"/></linearGradient>
<rect x="551.6" y="912" width="244.1" height="2" fill="url(#cs74)" shape-rendering="crispEdges"/>
<linearGradient id="cs75" x1="0" x2="1" y1="0" y2="0"><stop offset="0.0" stop-color="rgb(168,222,255)"/><stop offset="0.25" stop-color="rgb(221,232,255)"/><stop offset="0.5" stop-color="rgb(254,233,255)"/><stop offset="0.75" stop-color="rgb(255,205,229)"/><stop offset="1.0" stop-color="rgb(255,163,192)"/></linearGradient>
<rect x="551.6" y="914" width="244.1" height="2" fill="url(#cs75)" shape-rendering="crispEdges"/>
<linearGradient id="cs76" x1="0" x2="1" y1="0" y2="0"><stop offset="0.0" stop-color="rgb(168,221,255)"/><stop offset="0.25" stop-color="rgb(221,231,255)"/><stop offset="0.5" stop-color="rgb(253,232,255)"/><stop offset="0.75" stop-color="rgb(255,204,228)"/><stop offset="1.0" stop-color="rgb(255,162,192)"/></linearGradient>
<rect x="551.6" y="916" width="244.1" height="2" fill="url(#cs76)" shape-rendering="crispEdges"/>
<linearGradient id="cs77" x1="0" x2="1" y1="0" y2="0"><stop offset="0.0" stop-color="rgb(168,220,255)"/><stop offset="0.25" stop-color="rgb(220,229,255)"/><stop offset="0.5" stop-color="rgb(253,230,255)"/><stop offset="0.75" stop-color="rgb(255,202,227)"/><stop offset="1.0" stop-color="rgb(255,161,192)"/></linearGradient>
<rect x="551.6" y="918" width="244.1" height="2" fill="url(#cs77)" shape-rendering="crispEdges"/>
<linearGradient id="cs78" x1="0" x2="1" y1="0" y2="0"><stop offset="0.0" stop-color="rgb(168,218,255)"/><stop offset="0.25" stop-color="rgb(220,228,255)"/><stop offset="0.5" stop-color="rgb(253,229,255)"/><stop offset="0.75" stop-color="rgb(255,201,227)"/><stop offset="1.0" stop-color="rgb(255,160,192)"/></linearGradient>
<rect x="551.6" y="920" width="244.1" height="2" fill="url(#cs78)" shape-rendering="crispEdges"/>
<linearGradient id="cs79" x1="0" x2="1" y1="0" y2="0"><stop offset="0.0" stop-color="rgb(168,217,255)"/><stop offset="0.25" stop-color="rgb(219,226,255)"/><stop offset="0.5" stop-color="rgb(252,228,255)"/><stop offset="0.75" stop-color="rgb(255,200,226)"/><stop offset="1.0" stop-color="rgb(255,159,192)"/></linearGradient>
<rect x="551.6" y="922" width="244.1" height="2" fill="url(#cs79)" shape-rendering="crispEdges"/>
<linearGradient id="cs80" x1="0" x2="1" y1="0" y2="0"><stop offset="0.0" stop-color="rgb(168,216,255)"/><stop offset="0.25" stop-color="rgb(219,225,255)"/><stop offset="0.5" stop-color="rgb(252,226,255)"/><stop offset="0.75" stop-color="rgb(255,198,225)"/><stop offset="1.0" stop-color="rgb(255,158,192)"/></linearGradient>
<rect x="551.6" y="924" width="244.1" height="2" fill="url(#cs80)" shape-rendering="crispEdges"/>
<linearGradient id="cs81" x1="0" x2="1" y1="0" y2="0"><stop offset="0.0" stop-color="rgb(168,215,255)"/><stop offset="0.25" stop-color="rgb(218,223,255)"/><stop offset="0.5" stop-color="rgb(252,225,255)"/><stop offset="0.75" stop-color="rgb(255,197,225)"/><stop offset="1.0" stop-color="rgb(255,157,192)"/></linearGradient>
<rect x="551.6" y="926" width="244.1" height="2" fill="url(#cs81)" shape-rendering="crispEdges"/>
<linearGradient id="cs82" x1="0" x2="1" y1="0" y2="0"><stop offset="0.0" stop-color="rgb(168,214,255)"/><stop offset="0.25" stop-color="rgb(218,222,255)"/><stop offset="0.5" stop-color="rgb(251,224,255)"/><stop offset="0.75" stop-color="rgb(255,196,224)"/><stop offset="1.0" stop-color="rgb(255,156,192)"/></linearGradient>
<rect x="551.6" y="928" width="244.1" height="2" fill="url(#cs82)" shape-rendering="crispEdges"/>
<linearGradient id="cs83" x1="0" x2="1" y1="0" y2="0"><stop offset="0.0" stop-color="rgb(168,213,255)"/><stop offset="0.25" stop-color="rgb(217,220,255)"/><stop offset="0.5" stop-color="rgb(251,222,255)"/><stop offset="0.75" stop-color="rgb(255,194,223)"/><stop offset="1.0" stop-color="rgb(255,155,192)"/></linearGradient>
<rect x="551.6" y="930" width="244.1" height="2" fill="url(#cs83)" shape-rendering="crispEdges"/>
<linearGradient id="cs84" x1="0" x2="1" y1="0" y2="0"><stop offset="0.0" stop-color="rgb(168,211,255)"/><stop offset="0.25" stop-color="rgb(217,219,255)"/><stop offset="0.5" stop-color="rgb(251,221,255)"/><stop offset="0.75" stop-color="rgb(255,193,222)"/><stop offset="1.0" stop-color="rgb(255,154,192)"/></linearGradient>
<rect x="551.6" y="932" width="244.1" height="2" fill="url(#cs84)" shape-rendering="crispEdges"/>
<linearGradient id="cs85" x1="0" x2="1" y1="0" y2="0"><stop offset="0.0" stop-color="rgb(168,210,255)"/><stop offset="0.25" stop-color="rgb(216,217,255)"/><stop offset="0.5" stop-color="rgb(251,220,255)"/><stop offset="0.75" stop-color="rgb(255,192,222)"/><stop offset="1.0" stop-color="rgb(255,153,192)"/></linearGradient>
<rect x="551.6" y="934" width="244.1" height="2" fill="url(#cs85)" shape-rendering="crispEdges"/>
<linearGradient id="cs86" x1="0" x2="1" y1="0" y2="0"><stop offset="0.0" stop-color="rgb(168,209,255)"/><stop offset="0.25" stop-color="rgb(216,215,255)"/><stop offset="0.5" stop-color="rgb(250,218,255)"/><stop offset="0.75" stop-color="rgb(255,190,221)"/><stop offset="1.0" stop-color="rgb(255,152,192)"/></linearGradient>
<rect x="551.6" y="936" width="244.1" height="2" fill="url(#cs86)" shape-rendering="crispEdges"/>
<linearGradient id="cs87" x1="0" x2="1" y1="0" y2="0"><stop offset="0.0" stop-color="rgb(168,208,255)"/><stop offset="0.25" stop-color="rgb(215,214,255)"/><stop offset="0.5" stop-color="rgb(250,217,255)"/><stop offset="0.75" stop-color="rgb(255,189,220)"/><stop offset="1.0" stop-color="rgb(255,151,192)"/></linearGradient>
<rect x="551.6" y="938" width="244.1" height="2" fill="url(#cs87)" shape-rendering="crispEdges"/>
<linearGradient id="cs88" x1="0" x2="1" y1="0" y2="0"><stop offset="0.0" stop-color="rgb(168,207,255)"/><stop offset="0.25" stop-color="rgb(215,212,255)"/><stop offset="0.5" stop-color="rgb(250,215,255)"/><stop offset="0.75" stop-color="rgb(255,187,220)"/><stop offset="1.0" stop-color="rgb(255,150,192)"/></linearGradient>
<rect x="551.6" y="940" width="244.1" height="2" fill="url(#cs88)" shape-rendering="crispEdges"/>
<linearGradient id="cs89" x1="0" x2="1" y1="0" y2="0"><stop offset="0.0" stop-color="rgb(168,205,255)"/><stop offset="0.25" stop-color="rgb(214,211,255)"/><stop offset="0.5" stop-color="rgb(249,214,255)"/><stop offset="0.75" stop-color="rgb(255,186,219)"/><stop offset="1.0" stop-color="rgb(255,149,192)"/></linearGradient>
<rect x="551.6" y="942" width="244.1" height="2" fill="url(#cs89)" shape-rendering="crispEdges"/>
<linearGradient id="cs90" x1="0" x2="1" y1="0" y2="0"><stop offset="0.0" stop-color="rgb(168,204,255)"/><stop offset="0.25" stop-color="rgb(214,209,255)"/><stop offset="0.5" stop-color="rgb(249,213,255)"/><stop offset="0.75" stop-color="rgb(255,185,218)"/><stop offset="1.0" stop-color="rgb(255,148,192)"/></linearGradient>
<rect x="551.6" y="944" width="244.1" height="2" fill="url(#cs90)" shape-rendering="crispEdges"/>
<linearGradient id="cs91" x1="0" x2="1" y1="0" y2="0"><stop offset="0.0" stop-color="rgb(168,203,255)"/><stop offset="0.25" stop-color="rgb(213,208,255)"/><stop offset="0.5" stop-color="rgb(249,211,255)"/><stop offset="0.75" stop-color="rgb(255,183,218)"/><stop offset="1.0" stop-color="rgb(255,147,192)"/></linearGradient>
<rect x="551.6" y="946" width="244.1" height="2" fill="url(#cs91)" shape-rendering="crispEdges"/>
<linearGradient id="cs92" x1="0" x2="1" y1="0" y2="0"><stop offset="0.0" stop-color="rgb(168,202,255)"/><stop offset="0.25" stop-color="rgb(213,206,255)"/><stop offset="0.5" stop-color="rgb(248,210,255)"/><stop offset="0.75" stop-color="rgb(255,182,217)"/><stop offset="1.0" stop-color="rgb(255,146,192)"/></linearGradient>
<rect x="551.6" y="948" width="244.1" height="2" fill="url(#cs92)" shape-rendering="crispEdges"/>
<linearGradient id="cs93" x1="0" x2="1" y1="0" y2="0"><stop offset="0.0" stop-color="rgb(168,201,255)"/><stop offset="0.25" stop-color="rgb(212,205,255)"/><stop offset="0.5" stop-color="rgb(248,209,255)"/><stop offset="0.75" stop-color="rgb(255,181,216)"/><stop offset="1.0" stop-color="rgb(255,145,192)"/></linearGradient>
<rect x="551.6" y="950" width="244.1" height="2" fill="url(#cs93)" shape-rendering="crispEdges"/>
<rect x="551.6" y="764" width="244.10000000000002" height="188.20000000000005" fill="none" stroke="#a8a8a8" stroke-width="1.5"/>
<rect x="546.6" y="818.3" width="5.0" height="1.4" fill="#dcdcdc"/>
<text x="546.6" y="825.0" font-size="15.5" fill="#dcdcdc" text-anchor="end" textLength="30.0" lengthAdjust="spacingAndGlyphs">0,34</text>
<rect x="546.6" y="893.9" width="5.0" height="1.4" fill="#dcdcdc"/>
<text x="546.6" y="900.6" font-size="15.5" fill="#dcdcdc" text-anchor="end" textLength="30.0" lengthAdjust="spacingAndGlyphs">0,32</text>
<rect x="561.4" y="952.2" width="1.4" height="5.0" fill="#dcdcdc"/>
<text x="562.1" y="977.0" font-size="15.5" fill="#dcdcdc" text-anchor="middle" textLength="30.0" lengthAdjust="spacingAndGlyphs">0,29</text>
<rect x="610.3" y="952.2" width="1.4" height="5.0" fill="#dcdcdc"/>
<text x="611.0" y="977.0" font-size="15.5" fill="#dcdcdc" text-anchor="middle" textLength="21.0" lengthAdjust="spacingAndGlyphs">0,3</text>
<rect x="659.2" y="952.2" width="1.4" height="5.0" fill="#dcdcdc"/>
<text x="659.9" y="977.0" font-size="15.5" fill="#dcdcdc" text-anchor="middle" textLength="30.0" lengthAdjust="spacingAndGlyphs">0,31</text>
<rect x="708.1" y="952.2" width="1.4" height="5.0" fill="#dcdcdc"/>
<text x="708.8" y="977.0" font-size="15.5" fill="#dcdcdc" text-anchor="middle" textLength="30.0" lengthAdjust="spacingAndGlyphs">0,32</text>
<rect x="757.0" y="952.2" width="1.4" height="5.0" fill="#dcdcdc"/>
<text x="757.7" y="977.0" font-size="15.5" fill="#dcdcdc" text-anchor="middle" textLength="30.0" lengthAdjust="spacingAndGlyphs">0,33</text>
<clipPath id="cclip"><rect x="551.6" y="764" width="244.10000000000002" height="188.20000000000005"/></clipPath>
<line clip-path="url(#cclip)" x1="581.4" y1="952.5" x2="800" y2="791.5" stroke="#000" stroke-width="3"/>
<rect x="667" y="850.5" width="12.5" height="14.5" fill="none" stroke="#000" stroke-width="2.2"/>
<circle cx="640" cy="875" r="5" fill="#404040" stroke="#505050" stroke-width="1"/>
<circle cx="644" cy="864" r="5" fill="#303030" stroke="#505050" stroke-width="1"/>
<circle cx="648" cy="862" r="5" fill="#909090" stroke="#505050" stroke-width="1"/>
<circle cx="651" cy="860" r="5" fill="#b0b0b0" stroke="#505050" stroke-width="1"/>
<circle cx="653" cy="866" r="5" fill="#d8d8d8" stroke="#505050" stroke-width="1"/>
<circle cx="646" cy="868" r="5" fill="#ffffff" stroke="#505050" stroke-width="1"/>
<circle cx="652" cy="864" r="5" fill="#e8e8e8" stroke="#505050" stroke-width="1"/>
<circle cx="588.2" cy="917.3" r="4.8" fill="#111" stroke="#333" stroke-width="1"/>
<linearGradient id="thdr" x1="0" x2="0" y1="0" y2="1"><stop offset="0" stop-color="#2a2a2a"/><stop offset="0.45" stop-color="#262626"/><stop offset="0.5" stop-color="#0e0e0e"/><stop offset="1" stop-color="#0a0a0a"/></linearGradient>
<rect x="805.6" y="732.1" width="897.4" height="27.6" fill="url(#thdr)"/>
<rect x="805.6" y="732.1" width="8.5" height="27.6" fill="#000000"/>
<rect x="814.1" y="759.7" width="888.9" height="26.4" fill="#404040"/>
<rect x="805.6" y="759.7" width="8.5" height="26.4" fill="#1c1c1c"/>
<text x="815.7" y="779.5" font-size="14.8" fill="#ececec" textLength="32.5" lengthAdjust="spacingAndGlyphs">x: CIE31</text>
<g transform="scale(0.59 1)">
<text x="1510.7" y="779.5" font-size="14.8" fill="#ececec">0,23</text>
<text x="1584.6" y="779.5" font-size="14.8" fill="#ececec">0,28</text>
<text x="1658.1" y="779.5" font-size="14.8" fill="#ececec">0,30</text>
<text x="1723.4" y="779.5" font-size="14.8" fill="#ececec">0,31</text>
<text x="1788.3" y="779.5" font-size="14.8" fill="#ececec">0,31</text>
<text x="1853.2" y="779.5" font-size="14.8" fill="#ececec">0,31</text>
<text x="1918.1" y="779.5" font-size="14.8" fill="#ececec">0,31</text>
<text x="1983.1" y="779.5" font-size="14.8" fill="#ececec">0,31</text>
<text x="2048.0" y="779.5" font-size="14.8" fill="#ececec">0,31</text>
<text x="2112.9" y="779.5" font-size="14.8" fill="#ececec">0,31</text>
<text x="2177.8" y="779.5" font-size="14.8" fill="#ececec">0,31</text>
<text x="2242.7" y="779.5" font-size="14.8" fill="#ececec">0,31</text>
<text x="2307.6" y="779.5" font-size="14.8" fill="#ececec">0,31</text>
<text x="2372.5" y="779.5" font-size="14.8" fill="#ececec">0,31</text>
<text x="2437.5" y="779.5" font-size="14.8" fill="#ececec">0,31</text>
<text x="2502.4" y="779.5" font-size="14.8" fill="#ececec">0,31</text>
<text x="2567.3" y="779.5" font-size="14.8" fill="#ececec">0,31</text>
<text x="2632.2" y="779.5" font-size="14.8" fill="#ececec">0,31</text>
<text x="2697.1" y="779.5" font-size="14.8" fill="#ececec">0,31</text>
<text x="2762.0" y="779.5" font-size="14.8" fill="#ececec">0,31</text>
<text x="2826.9" y="779.5" font-size="14.8" fill="#ececec">0,31</text>
</g>
<rect x="814.1" y="786.1" width="888.9" height="26.4" fill="#7c7c7c"/>
<rect x="805.6" y="786.1" width="8.5" height="26.4" fill="#1c1c1c"/>
<text x="815.7" y="805.9" font-size="14.8" fill="#ececec" textLength="32.5" lengthAdjust="spacingAndGlyphs">y: CIE31</text>
<g transform="scale(0.59 1)">
<text x="1510.7" y="805.9" font-size="14.8" fill="#ececec">0,24</text>
<text x="1584.6" y="805.9" font-size="14.8" fill="#ececec">0,29</text>
<text x="1658.1" y="805.9" font-size="14.8" fill="#ececec">0,31</text>
<text x="1723.4" y="805.9" font-size="14.8" fill="#ececec">0,33</text>
<text x="1788.3" y="805.9" font-size="14.8" fill="#ececec">0,33</text>
<text x="1853.2" y="805.9" font-size="14.8" fill="#ececec">0,32</text>
<text x="1918.1" y="805.9" font-size="14.8" fill="#ececec">0,33</text>
<text x="1983.1" y="805.9" font-size="14.8" fill="#ececec">0,33</text>
<text x="2048.0" y="805.9" font-size="14.8" fill="#ececec">0,33</text>
<text x="2112.9" y="805.9" font-size="14.8" fill="#ececec">0,33</text>
<text x="2177.8" y="805.9" font-size="14.8" fill="#ececec">0,33</text>
<text x="2242.7" y="805.9" font-size="14.8" fill="#ececec">0,33</text>
<text x="2307.6" y="805.9" font-size="14.8" fill="#ececec">0,33</text>
<text x="2372.5" y="805.9" font-size="14.8" fill="#ececec">0,33</text>
<text x="2437.5" y="805.9" font-size="14.8" fill="#ececec">0,33</text>
<text x="2502.4" y="805.9" font-size="14.8" fill="#ececec">0,33</text>
<text x="2567.3" y="805.9" font-size="14.8" fill="#ececec">0,33</text>
<text x="2632.2" y="805.9" font-size="14.8" fill="#ececec">0,33</text>
<text x="2697.1" y="805.9" font-size="14.8" fill="#ececec">0,33</text>
<text x="2762.0" y="805.9" font-size="14.8" fill="#ececec">0,33</text>
<text x="2826.9" y="805.9" font-size="14.8" fill="#ececec">0,33</text>
</g>
<rect x="814.1" y="812.6" width="888.9" height="26.4" fill="#404040"/>
<rect x="805.6" y="812.6" width="8.5" height="26.4" fill="#1c1c1c"/>
<text x="815.7" y="832.4" font-size="14.8" fill="#ececec" textLength="5.8" lengthAdjust="spacingAndGlyphs">Y</text>
<g transform="scale(0.59 1)">
<text x="1510.7" y="832.4" font-size="14.8" fill="#ececec">0,25</text>
<text x="1584.6" y="832.4" font-size="14.8" fill="#ececec">0,64</text>
<text x="1658.1" y="832.4" font-size="14.8" fill="#ececec">2,07</text>
<text x="1723.4" y="832.4" font-size="14.8" fill="#ececec">4,58</text>
<text x="1788.3" y="832.4" font-size="14.8" fill="#ececec">8,78</text>
<text x="1853.2" y="832.4" font-size="14.8" fill="#ececec">14,01</text>
<text x="1918.1" y="832.4" font-size="14.8" fill="#ececec">20,51</text>
<text x="1983.1" y="832.4" font-size="14.8" fill="#ececec">28,75</text>
<text x="2048.0" y="832.4" font-size="14.8" fill="#ececec">38,85</text>
<text x="2112.9" y="832.4" font-size="14.8" fill="#ececec">50,78</text>
<text x="2177.8" y="832.4" font-size="14.8" fill="#ececec">64,20</text>
<text x="2242.7" y="832.4" font-size="14.8" fill="#ececec">78,48</text>
<text x="2307.6" y="832.4" font-size="14.8" fill="#ececec">96,18</text>
<text x="2372.5" y="832.4" font-size="14.8" fill="#ececec">114,08</text>
<text x="2437.5" y="832.4" font-size="14.8" fill="#ececec">134,04</text>
<text x="2502.4" y="832.4" font-size="14.8" fill="#ececec">157,22</text>
<text x="2567.3" y="832.4" font-size="14.8" fill="#ececec">181,22</text>
<text x="2632.2" y="832.4" font-size="14.8" fill="#ececec">208,97</text>
<text x="2697.1" y="832.4" font-size="14.8" fill="#ececec">237,31</text>
<text x="2762.0" y="832.4" font-size="14.8" fill="#ececec">268,00</text>
<text x="2826.9" y="832.4" font-size="14.8" fill="#ececec">299,93</text>
</g>
<rect x="814.1" y="839.0" width="888.9" height="26.4" fill="#7c7c7c"/>
<rect x="805.6" y="839.0" width="8.5" height="26.4" fill="#1c1c1c"/>
<text x="815.7" y="858.8" font-size="14.8" fill="#ececec" textLength="34.5" lengthAdjust="spacingAndGlyphs">Target Y</text>
<g transform="scale(0.59 1)">
<text x="1510.7" y="858.8" font-size="14.8" fill="#ececec">0,00</text>
<text x="1584.6" y="858.8" font-size="14.8" fill="#ececec">1,21</text>
<text x="1658.1" y="858.8" font-size="14.8" fill="#ececec">3,10</text>
<text x="1723.4" y="858.8" font-size="14.8" fill="#ececec">5,81</text>
<text x="1788.3" y="858.8" font-size="14.8" fill="#ececec">9,93</text>
<text x="1853.2" y="858.8" font-size="14.8" fill="#ececec">15,38</text>
<text x="1918.1" y="858.8" font-size="14.8" fill="#ececec">21,68</text>
<text x="1983.1" y="858.8" font-size="14.8" fill="#ececec">29,96</text>
<text x="2048.0" y="858.8" font-size="14.8" fill="#ececec">39,85</text>
<text x="2112.9" y="858.8" font-size="14.8" fill="#ececec">51,42</text>
<text x="2177.8" y="858.8" font-size="14.8" fill="#ececec">64,74</text>
<text x="2242.7" y="858.8" font-size="14.8" fill="#ececec">78,66</text>
<text x="2307.6" y="858.8" font-size="14.8" fill="#ececec">95,54</text>
<text x="2372.5" y="858.8" font-size="14.8" fill="#ececec">114,37</text>
<text x="2437.5" y="858.8" font-size="14.8" fill="#ececec">133,53</text>
<text x="2502.4" y="858.8" font-size="14.8" fill="#ececec">156,26</text>
<text x="2567.3" y="858.8" font-size="14.8" fill="#ececec">181,11</text>
<text x="2632.2" y="858.8" font-size="14.8" fill="#ececec">208,12</text>
<text x="2697.1" y="858.8" font-size="14.8" fill="#ececec">237,34</text>
<text x="2762.0" y="858.8" font-size="14.8" fill="#ececec">266,32</text>
<text x="2826.9" y="858.8" font-size="14.8" fill="#ececec">299,93</text>
</g>
<rect x="814.1" y="865.4" width="888.9" height="26.4" fill="#404040"/>
<rect x="805.6" y="865.4" width="8.5" height="26.4" fill="#1c1c1c"/>
<text x="815.7" y="885.2" font-size="14.8" fill="#ececec" textLength="70" lengthAdjust="spacingAndGlyphs">Gamma Log/Log</text>
<g transform="scale(0.59 1)">
<text x="1510.7" y="885.2" font-size="14.8" fill="#ececec">1,28</text>
<text x="1584.6" y="885.2" font-size="14.8" fill="#ececec">2,06</text>
<text x="1658.1" y="885.2" font-size="14.8" fill="#ececec">2,18</text>
<text x="1723.4" y="885.2" font-size="14.8" fill="#ececec">2,20</text>
<text x="1788.3" y="885.2" font-size="14.8" fill="#ececec">2,19</text>
<text x="1853.2" y="885.2" font-size="14.8" fill="#ececec">2,22</text>
<text x="1918.1" y="885.2" font-size="14.8" fill="#ececec">2,22</text>
<text x="1983.1" y="885.2" font-size="14.8" fill="#ececec">2,23</text>
<text x="2048.0" y="885.2" font-size="14.8" fill="#ececec">2,23</text>
<text x="2112.9" y="885.2" font-size="14.8" fill="#ececec">2,23</text>
<text x="2177.8" y="885.2" font-size="14.8" fill="#ececec">2,24</text>
<text x="2242.7" y="885.2" font-size="14.8" fill="#ececec">2,24</text>
<text x="2307.6" y="885.2" font-size="14.8" fill="#ececec">2,23</text>
<text x="2372.5" y="885.2" font-size="14.8" fill="#ececec">2,25</text>
<text x="2437.5" y="885.2" font-size="14.8" fill="#ececec">2,24</text>
<text x="2502.4" y="885.2" font-size="14.8" fill="#ececec">2,24</text>
<text x="2567.3" y="885.2" font-size="14.8" fill="#ececec">2,26</text>
<text x="2632.2" y="885.2" font-size="14.8" fill="#ececec">2,24</text>
<text x="2697.1" y="885.2" font-size="14.8" fill="#ececec">2,27</text>
<text x="2762.0" y="885.2" font-size="14.8" fill="#ececec">2,15</text>
<text x="2826.9" y="885.2" font-size="14.8" fill="#ececec">2,27</text>
</g>
<rect x="814.1" y="891.9" width="888.9" height="26.4" fill="#7c7c7c"/>
<rect x="805.6" y="891.9" width="8.5" height="26.4" fill="#1c1c1c"/>
<text x="815.7" y="911.6" font-size="14.8" fill="#ececec" textLength="16.7" lengthAdjust="spacingAndGlyphs">CCT</text>
<g transform="scale(0.59 1)">
<text x="1510.7" y="911.6" font-size="14.8" fill="#ececec">34868,00</text>
<text x="1584.6" y="911.6" font-size="14.8" fill="#ececec">10485,00</text>
<text x="1658.1" y="911.6" font-size="14.8" fill="#ececec">7793,00</text>
<text x="1723.4" y="911.6" font-size="14.8" fill="#ececec">6819,00</text>
<text x="1788.3" y="911.6" font-size="14.8" fill="#ececec">6853,00</text>
<text x="1853.2" y="911.6" font-size="14.8" fill="#ececec">6933,00</text>
<text x="1918.1" y="911.6" font-size="14.8" fill="#ececec">6745,00</text>
<text x="1983.1" y="911.6" font-size="14.8" fill="#ececec">6723,00</text>
<text x="2048.0" y="911.6" font-size="14.8" fill="#ececec">6743,00</text>
<text x="2112.9" y="911.6" font-size="14.8" fill="#ececec">6802,00</text>
<text x="2177.8" y="911.6" font-size="14.8" fill="#ececec">6765,00</text>
<text x="2242.7" y="911.6" font-size="14.8" fill="#ececec">6719,00</text>
<text x="2307.6" y="911.6" font-size="14.8" fill="#ececec">6745,00</text>
<text x="2372.5" y="911.6" font-size="14.8" fill="#ececec">6787,00</text>
<text x="2437.5" y="911.6" font-size="14.8" fill="#ececec">6766,00</text>
<text x="2502.4" y="911.6" font-size="14.8" fill="#ececec">6750,00</text>
<text x="2567.3" y="911.6" font-size="14.8" fill="#ececec">6789,00</text>
<text x="2632.2" y="911.6" font-size="14.8" fill="#ececec">6770,00</text>
<text x="2697.1" y="911.6" font-size="14.8" fill="#ececec">6776,00</text>
<text x="2762.0" y="911.6" font-size="14.8" fill="#ececec">6731,00</text>
<text x="2826.9" y="911.6" font-size="14.8" fill="#ececec">6862,00</text>
</g>
<rect x="814.1" y="918.3" width="888.9" height="26.4" fill="#404040"/>
<rect x="805.6" y="918.3" width="8.5" height="26.4" fill="#1c1c1c"/>
<text x="815.7" y="938.1" font-size="14.8" fill="#ececec" textLength="34.5" lengthAdjust="spacingAndGlyphs">ΔE 2000</text>
<g transform="scale(0.59 1)">
<text x="1510.7" y="938.1" font-size="14.8" fill="#ececec">1,37</text>
<text x="1584.6" y="938.1" font-size="14.8" fill="#ececec">1,65</text>
<text x="1658.1" y="938.1" font-size="14.8" fill="#ececec">2,43</text>
<text x="1723.4" y="938.1" font-size="14.8" fill="#ececec">1,70</text>
<text x="1788.3" y="938.1" font-size="14.8" fill="#ececec">1,63</text>
<text x="1853.2" y="938.1" font-size="14.8" fill="#ececec">1,59</text>
<text x="1918.1" y="938.1" font-size="14.8" fill="#ececec">1,30</text>
<text x="1983.1" y="938.1" font-size="14.8" fill="#ececec">1,19</text>
<text x="2048.0" y="938.1" font-size="14.8" fill="#ececec">1,36</text>
<text x="2112.9" y="938.1" font-size="14.8" fill="#ececec">1,72</text>
<text x="2177.8" y="938.1" font-size="14.8" fill="#ececec">1,56</text>
<text x="2242.7" y="938.1" font-size="14.8" fill="#ececec">1,29</text>
<text x="2307.6" y="938.1" font-size="14.8" fill="#ececec">2,11</text>
<text x="2372.5" y="938.1" font-size="14.8" fill="#ececec">1,89</text>
<text x="2437.5" y="938.1" font-size="14.8" fill="#ececec">1,77</text>
<text x="2502.4" y="938.1" font-size="14.8" fill="#ececec">2,13</text>
<text x="2567.3" y="938.1" font-size="14.8" fill="#ececec">2,07</text>
<text x="2632.2" y="938.1" font-size="14.8" fill="#ececec">2,33</text>
<text x="2697.1" y="938.1" font-size="14.8" fill="#ececec">2,37</text>
<text x="2762.0" y="938.1" font-size="14.8" fill="#ececec">2,25</text>
<text x="2826.9" y="938.1" font-size="14.8" fill="#ececec">3,09</text>
</g>
<rect x="814.1" y="944.7" width="888.9" height="26.4" fill="#7c7c7c"/>
<rect x="805.6" y="944.7" width="8.5" height="26.4" fill="#1c1c1c"/>
<text x="815.7" y="964.5" font-size="14.8" fill="#ececec" textLength="23" lengthAdjust="spacingAndGlyphs">dEITP</text>
<g transform="scale(0.59 1)">
<text x="1510.7" y="964.5" font-size="14.8" fill="#ececec">68,38</text>
<text x="1584.6" y="964.5" font-size="14.8" fill="#ececec">24,33</text>
<text x="1658.1" y="964.5" font-size="14.8" fill="#ececec">18,87</text>
<text x="1723.4" y="964.5" font-size="14.8" fill="#ececec">12,37</text>
<text x="1788.3" y="964.5" font-size="14.8" fill="#ececec">7,49</text>
<text x="1853.2" y="964.5" font-size="14.8" fill="#ececec">6,35</text>
<text x="1918.1" y="964.5" font-size="14.8" fill="#ececec">4,09</text>
<text x="1983.1" y="964.5" font-size="14.8" fill="#ececec">3,33</text>
<text x="2048.0" y="964.5" font-size="14.8" fill="#ececec">2,83</text>
<text x="2112.9" y="964.5" font-size="14.8" fill="#ececec">2,98</text>
<text x="2177.8" y="964.5" font-size="14.8" fill="#ececec">2,57</text>
<text x="2242.7" y="964.5" font-size="14.8" fill="#ececec">2,05</text>
<text x="2307.6" y="964.5" font-size="14.8" fill="#ececec">2,73</text>
<text x="2372.5" y="964.5" font-size="14.8" fill="#ececec">2,74</text>
<text x="2437.5" y="964.5" font-size="14.8" fill="#ececec">2,52</text>
<text x="2502.4" y="964.5" font-size="14.8" fill="#ececec">2,64</text>
<text x="2567.3" y="964.5" font-size="14.8" fill="#ececec">2,74</text>
<text x="2632.2" y="964.5" font-size="14.8" fill="#ececec">2,77</text>
<text x="2697.1" y="964.5" font-size="14.8" fill="#ececec">2,78</text>
<text x="2762.0" y="964.5" font-size="14.8" fill="#ececec">2,47</text>
<text x="2826.9" y="964.5" font-size="14.8" fill="#ececec">3,56</text>
</g>
<g transform="scale(0.59 1)">
<text x="1510.7" y="751.6" font-size="14.8" fill="#ececec">0</text>
<text x="1584.6" y="751.6" font-size="14.8" fill="#ececec">5</text>
<text x="1658.1" y="751.6" font-size="14.8" fill="#ececec">10</text>
<text x="1723.4" y="751.6" font-size="14.8" fill="#ececec">15</text>
<text x="1788.3" y="751.6" font-size="14.8" fill="#ececec">20</text>
<text x="1853.2" y="751.6" font-size="14.8" fill="#ececec">25</text>
<text x="1918.1" y="751.6" font-size="14.8" fill="#ececec">30</text>
<text x="1983.1" y="751.6" font-size="14.8" fill="#ececec">35</text>
<text x="2048.0" y="751.6" font-size="14.8" fill="#ececec">40</text>
<text x="2112.9" y="751.6" font-size="14.8" fill="#ececec">45</text>
<text x="2177.8" y="751.6" font-size="14.8" fill="#ececec">50</text>
<text x="2242.7" y="751.6" font-size="14.8" fill="#ececec">55</text>
<text x="2307.6" y="751.6" font-size="14.8" fill="#ececec">60</text>
<text x="2372.5" y="751.6" font-size="14.8" fill="#ececec">65</text>
<text x="2437.5" y="751.6" font-size="14.8" fill="#ececec">70</text>
<text x="2502.4" y="751.6" font-size="14.8" fill="#ececec">75</text>
<text x="2567.3" y="751.6" font-size="14.8" fill="#ececec">80</text>
<text x="2632.2" y="751.6" font-size="14.8" fill="#ececec">85</text>
<text x="2697.1" y="751.6" font-size="14.8" fill="#ececec">90</text>
<text x="2762.0" y="751.6" font-size="14.8" fill="#ececec">95</text>
<text x="2826.9" y="751.6" font-size="14.8" fill="#ececec">100</text>
</g>
<linearGradient id="pbtn" x1="0" x2="0" y1="0" y2="1"><stop offset="0" stop-color="#b4b4b4"/><stop offset="0.25" stop-color="#999"/><stop offset="1" stop-color="#5a5a5a"/></linearGradient>
<rect x="199.1" y="993.2" width="59" height="62" rx="4" fill="url(#pbtn)"/>
<rect x="204.1" y="998" width="49" height="36" rx="4" fill="rgb(0,0,0)"/>
<text x="228.6" y="1048.6" font-size="11.5" fill="#262626" text-anchor="middle" textLength="6.2" lengthAdjust="spacingAndGlyphs" stroke="#262626" stroke-width="0.35">0</text>
<rect x="260.6" y="993.2" width="59" height="62" rx="4" fill="url(#pbtn)"/>
<rect x="265.6" y="998" width="49" height="36" rx="4" fill="rgb(13,13,13)"/>
<text x="290.1" y="1048.6" font-size="11.5" fill="#262626" text-anchor="middle" textLength="6.2" lengthAdjust="spacingAndGlyphs" stroke="#262626" stroke-width="0.35">5</text>
<rect x="322.0" y="993.2" width="59" height="62" rx="4" fill="url(#pbtn)"/>
<rect x="327.0" y="998" width="49" height="36" rx="4" fill="rgb(26,26,26)"/>
<text x="351.5" y="1048.6" font-size="11.5" fill="#262626" text-anchor="middle" textLength="12.4" lengthAdjust="spacingAndGlyphs" stroke="#262626" stroke-width="0.35">10</text>
<rect x="383.5" y="993.2" width="59" height="62" rx="4" fill="url(#pbtn)"/>
<rect x="388.5" y="998" width="49" height="36" rx="4" fill="rgb(38,38,38)"/>
<text x="413.0" y="1048.6" font-size="11.5" fill="#262626" text-anchor="middle" textLength="12.4" lengthAdjust="spacingAndGlyphs" stroke="#262626" stroke-width="0.35">15</text>
<rect x="444.9" y="993.2" width="59" height="62" rx="4" fill="url(#pbtn)"/>
<rect x="449.9" y="998" width="49" height="36" rx="4" fill="rgb(51,51,51)"/>
<text x="474.4" y="1048.6" font-size="11.5" fill="#262626" text-anchor="middle" textLength="12.4" lengthAdjust="spacingAndGlyphs" stroke="#262626" stroke-width="0.35">20</text>
<rect x="506.4" y="993.2" width="59" height="62" rx="4" fill="url(#pbtn)"/>
<rect x="511.4" y="998" width="49" height="36" rx="4" fill="rgb(64,64,64)"/>
<text x="535.9" y="1048.6" font-size="11.5" fill="#262626" text-anchor="middle" textLength="12.4" lengthAdjust="spacingAndGlyphs" stroke="#262626" stroke-width="0.35">25</text>
<rect x="567.8" y="993.2" width="59" height="62" rx="4" fill="url(#pbtn)"/>
<rect x="572.8" y="998" width="49" height="36" rx="4" fill="rgb(76,76,76)"/>
<text x="597.3" y="1048.6" font-size="11.5" fill="#262626" text-anchor="middle" textLength="12.4" lengthAdjust="spacingAndGlyphs" stroke="#262626" stroke-width="0.35">30</text>
<rect x="629.2" y="993.2" width="59" height="62" rx="4" fill="url(#pbtn)"/>
<rect x="634.2" y="998" width="49" height="36" rx="4" fill="rgb(89,89,89)"/>
<text x="658.8" y="1048.6" font-size="11.5" fill="#262626" text-anchor="middle" textLength="12.4" lengthAdjust="spacingAndGlyphs" stroke="#262626" stroke-width="0.35">35</text>
<rect x="690.7" y="993.2" width="59" height="62" rx="4" fill="url(#pbtn)"/>
<rect x="695.7" y="998" width="49" height="36" rx="4" fill="rgb(102,102,102)"/>
<text x="720.2" y="1048.6" font-size="11.5" fill="#262626" text-anchor="middle" textLength="12.4" lengthAdjust="spacingAndGlyphs" stroke="#262626" stroke-width="0.35">40</text>
<rect x="752.2" y="993.2" width="59" height="62" rx="4" fill="url(#pbtn)"/>
<rect x="757.2" y="998" width="49" height="36" rx="4" fill="rgb(115,115,115)"/>
<text x="781.7" y="1048.6" font-size="11.5" fill="#262626" text-anchor="middle" textLength="12.4" lengthAdjust="spacingAndGlyphs" stroke="#262626" stroke-width="0.35">45</text>
<rect x="813.6" y="993.2" width="59" height="62" rx="4" fill="url(#pbtn)"/>
<rect x="818.6" y="998" width="49" height="36" rx="4" fill="rgb(128,128,128)"/>
<text x="843.1" y="1048.6" font-size="11.5" fill="#262626" text-anchor="middle" textLength="12.4" lengthAdjust="spacingAndGlyphs" stroke="#262626" stroke-width="0.35">50</text>
<rect x="875.1" y="993.2" width="59" height="62" rx="4" fill="url(#pbtn)"/>
<rect x="880.1" y="998" width="49" height="36" rx="4" fill="rgb(140,140,140)"/>
<text x="904.6" y="1048.6" font-size="11.5" fill="#262626" text-anchor="middle" textLength="12.4" lengthAdjust="spacingAndGlyphs" stroke="#262626" stroke-width="0.35">55</text>
<rect x="936.5" y="993.2" width="59" height="62" rx="4" fill="url(#pbtn)"/>
<rect x="941.5" y="998" width="49" height="36" rx="4" fill="rgb(153,153,153)"/>
<text x="966.0" y="1048.6" font-size="11.5" fill="#262626" text-anchor="middle" textLength="12.4" lengthAdjust="spacingAndGlyphs" stroke="#262626" stroke-width="0.35">60</text>
<rect x="998.0" y="993.2" width="59" height="62" rx="4" fill="url(#pbtn)"/>
<rect x="1003.0" y="998" width="49" height="36" rx="4" fill="rgb(166,166,166)"/>
<text x="1027.5" y="1048.6" font-size="11.5" fill="#262626" text-anchor="middle" textLength="12.4" lengthAdjust="spacingAndGlyphs" stroke="#262626" stroke-width="0.35">65</text>
<rect x="1059.4" y="993.2" width="59" height="62" rx="4" fill="url(#pbtn)"/>
<rect x="1064.4" y="998" width="49" height="36" rx="4" fill="rgb(178,178,178)"/>
<text x="1088.9" y="1048.6" font-size="11.5" fill="#262626" text-anchor="middle" textLength="12.4" lengthAdjust="spacingAndGlyphs" stroke="#262626" stroke-width="0.35">70</text>
<rect x="1120.8" y="993.2" width="59" height="62" rx="4" fill="url(#pbtn)"/>
<rect x="1125.8" y="998" width="49" height="36" rx="4" fill="rgb(191,191,191)"/>
<text x="1150.3" y="1048.6" font-size="11.5" fill="#262626" text-anchor="middle" textLength="12.4" lengthAdjust="spacingAndGlyphs" stroke="#262626" stroke-width="0.35">75</text>
<rect x="1182.3" y="993.2" width="59" height="62" rx="4" fill="url(#pbtn)"/>
<rect x="1187.3" y="998" width="49" height="36" rx="4" fill="rgb(204,204,204)"/>
<text x="1211.8" y="1048.6" font-size="11.5" fill="#262626" text-anchor="middle" textLength="12.4" lengthAdjust="spacingAndGlyphs" stroke="#262626" stroke-width="0.35">80</text>
<rect x="1243.8" y="993.2" width="59" height="62" rx="4" fill="url(#pbtn)"/>
<rect x="1248.8" y="998" width="49" height="36" rx="4" fill="rgb(217,217,217)"/>
<text x="1273.2" y="1048.6" font-size="11.5" fill="#262626" text-anchor="middle" textLength="12.4" lengthAdjust="spacingAndGlyphs" stroke="#262626" stroke-width="0.35">85</text>
<rect x="1305.2" y="993.2" width="59" height="62" rx="4" fill="url(#pbtn)"/>
<rect x="1310.2" y="998" width="49" height="36" rx="4" fill="rgb(230,230,230)"/>
<text x="1334.7" y="1048.6" font-size="11.5" fill="#262626" text-anchor="middle" textLength="12.4" lengthAdjust="spacingAndGlyphs" stroke="#262626" stroke-width="0.35">90</text>
<rect x="1366.6" y="993.2" width="59" height="62" rx="4" fill="url(#pbtn)"/>
<rect x="1371.6" y="998" width="49" height="36" rx="4" fill="rgb(242,242,242)"/>
<text x="1396.1" y="1048.6" font-size="11.5" fill="#262626" text-anchor="middle" textLength="12.4" lengthAdjust="spacingAndGlyphs" stroke="#262626" stroke-width="0.35">95</text>
<rect x="1428.1" y="993.2" width="59" height="62" rx="4" fill="#1a1a1a"/>
<rect x="1433.1" y="998" width="49" height="36" rx="4" fill="#ffffff"/>
<text x="1457.6" y="1048.3" font-size="10.5" fill="#ffffff" text-anchor="middle" textLength="17.0" lengthAdjust="spacingAndGlyphs" font-weight="bold">100</text>
<linearGradient id="cbtn" x1="0" x2="0" y1="0" y2="1"><stop offset="0" stop-color="#a8a8a8"/><stop offset="1" stop-color="#6e6e6e"/></linearGradient>
<linearGradient id="cknob" x1="0" x2="0" y1="0" y2="1"><stop offset="0" stop-color="#7a7a7a"/><stop offset="1" stop-color="#b2b2b2"/></linearGradient>
<rect x="1488.0" y="992.0" width="326.0" height="64.0" fill="#2a2a2a"/>
<rect x="1491" y="993.3" width="48" height="17.5" rx="3" fill="url(#cbtn)"/>
<circle cx="1515" cy="1001.5" r="8" fill="url(#cknob)"/>
<path d="M1510.5 1004 L1515 998.5 L1519.5 1004 Z" fill="#222"/>
<rect x="1491" y="1012" width="48" height="44" rx="3" fill="url(#cbtn)"/>
<rect x="1500.3" y="1018.2" width="29" height="29.4" rx="3" fill="none" stroke="#2a2a2a" stroke-width="2.4"/>
<rect x="1507.6" y="1025.9" width="14.4" height="14.0" fill="#0a0a0a"/>
<rect x="1540.2" y="992.9" width="226" height="30.2" rx="3" fill="url(#cbtn)"/>
<rect x="1585.6" y="993.0" width="1.2" height="30.0" fill="#3a3a3a"/>
<rect x="1630.8" y="993.0" width="1.2" height="30.0" fill="#3a3a3a"/>
<rect x="1675.9" y="993.0" width="1.2" height="30.0" fill="#3a3a3a"/>
<rect x="1721.0" y="993.0" width="1.2" height="30.0" fill="#3a3a3a"/>
<circle cx="1562.9" cy="1008.1" r="9.9" fill="url(#cknob)"/>
<circle cx="1608.9" cy="1008.1" r="9.9" fill="url(#cknob)"/>
<circle cx="1654" cy="1008.1" r="9.9" fill="url(#cknob)"/>
<circle cx="1699" cy="1008.1" r="9.9" fill="url(#cknob)"/>
<circle cx="1744" cy="1008.1" r="9.9" fill="url(#cknob)"/>
<rect x="1559.0" y="1004.5" width="7.5" height="7.5" fill="#222"/>
<path d="M1605.5 1003 L1613 1008 L1605.5 1013 Z" fill="#222"/>
<path d="M1650.8 1003.3 H1648.6 V1013.3 H1650.8 M1657.6 1003.3 H1659.8 V1013.3 H1657.6" fill="none" stroke="#262626" stroke-width="1.8"/>
<rect x="1652.3" y="1007.2" width="1.6" height="1.6" fill="#262626"/>
<rect x="1654.9" y="1007.2" width="1.6" height="1.6" fill="#262626"/>
<ellipse cx="1695.6" cy="1007.6" rx="3.3" ry="2.7" fill="none" stroke="#262626" stroke-width="1.8"/><ellipse cx="1702.2" cy="1007.6" rx="3.3" ry="2.7" fill="none" stroke="#262626" stroke-width="1.8"/>
<path d="M1739.2 1006.2 A5.2 5.2 0 0 1 1748.6 1004.6 M1748.8 1009.8 A5.2 5.2 0 0 1 1739.4 1011.4" fill="none" stroke="#262626" stroke-width="2"/>
<path d="M1745.6 1003.4 L1750.6 1002.2 L1750.2 1007.4 Z M1742.4 1012.6 L1737.4 1013.8 L1737.8 1008.6 Z" fill="#262626"/>
<linearGradient id="dkb" x1="0" x2="0" y1="0" y2="1"><stop offset="0" stop-color="#3c3c3c"/><stop offset="1" stop-color="#282828"/></linearGradient>
<linearGradient id="dkk" x1="0" x2="0" y1="0" y2="1"><stop offset="0" stop-color="#262626"/><stop offset="1" stop-color="#3a3a3a"/></linearGradient>
<rect x="1766.8" y="993" width="46" height="30.2" rx="3" fill="url(#dkb)"/>
<ellipse cx="1790.3" cy="1008.3" rx="9.8" ry="10.2" fill="url(#dkk)"/>
<rect x="1540.2" y="1024" width="272.7" height="32" rx="3" fill="url(#cbtn)"/>
<rect x="1676.0" y="1024.0" width="1.2" height="32.0" fill="#3a3a3a"/>
<circle cx="1570.6" cy="1038.8" r="10" fill="url(#cknob)"/>
<path d="M1570.3 1034 L1566 1038.8 L1570.3 1043.6 M1575 1034 L1570.7 1038.8 L1575 1043.6" fill="none" stroke="#2a2a2a" stroke-width="1.5"/>
<circle cx="1784.2" cy="1038.8" r="10" fill="url(#cknob)"/>
<path d="M1779.5 1034 L1783.8 1038.8 L1779.5 1043.6 M1784.2 1034 L1788.5 1038.8 L1784.2 1043.6" fill="none" stroke="#2a2a2a" stroke-width="1.5"/>
<text x="1597.8" y="1046.7" font-size="22" fill="#333333" textLength="50.0" lengthAdjust="spacingAndGlyphs" font-weight="bold">Back</text>
<text x="1704.3" y="1046.7" font-size="22" fill="#333333" textLength="51.5" lengthAdjust="spacingAndGlyphs" font-weight="bold">Next</text>
</svg></body></html>
